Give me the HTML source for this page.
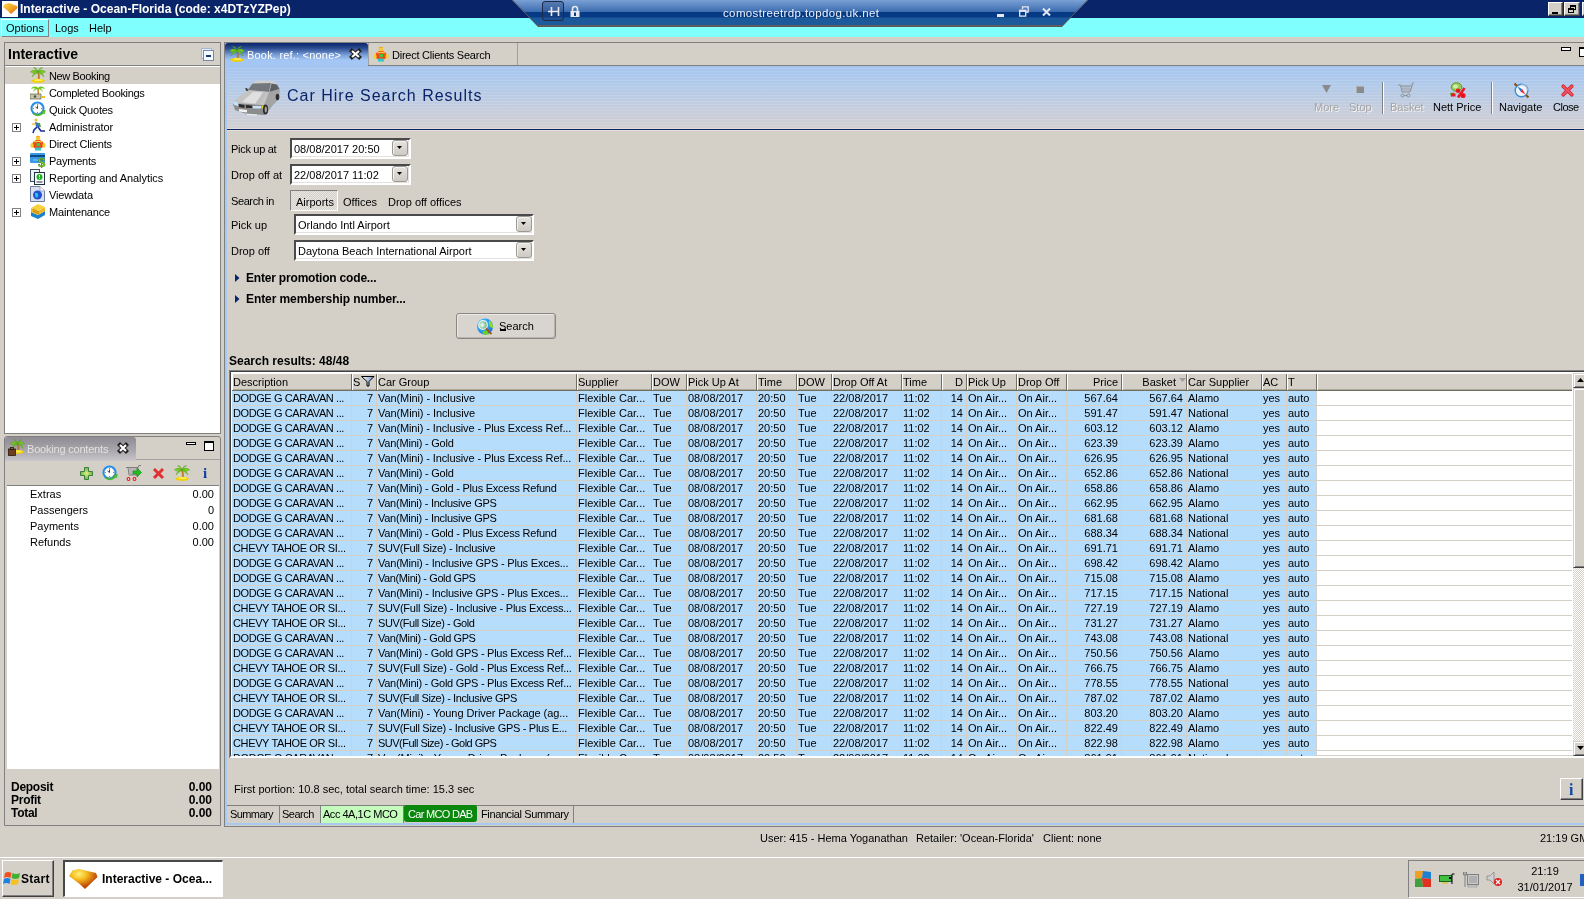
<!DOCTYPE html><html><head><meta charset="utf-8"><title>Interactive</title><style>
*{margin:0;padding:0;box-sizing:border-box}
html,body{width:1584px;height:899px;overflow:hidden}
body{position:relative;background:#d4d0c8;font-family:"Liberation Sans",sans-serif;font-size:11px;color:#000}
.a{position:absolute}
.t{position:absolute;white-space:nowrap;line-height:13px}
.b{font-weight:bold}
svg{position:absolute;overflow:visible}
.r{position:absolute;left:232px;width:1340px;height:15px}
.r span{position:absolute;top:0;height:14px;line-height:14px;white-space:nowrap;overflow:hidden}
.hd span{position:absolute;top:0;height:16px;line-height:16px;white-space:nowrap}
</style></head><body><div id="root" style="position:absolute;left:0;top:0;width:1584px;height:899px;overflow:hidden;background:#d4d0c8;will-change:transform">
<div class="a" style="left:0px;top:0px;width:1584px;height:18px;background:#0a246a"></div>
<div class="a" style="left:2px;top:1px;width:16px;height:16px;background:#fff"></div>
<svg style="left:3px;top:3px" width="14" height="12" viewBox="0 0 14 12"><defs><linearGradient id="og" x1="0" y1="0" x2="1" y2="1"><stop offset="0" stop-color="#ffd84a"/><stop offset="0.6" stop-color="#f0a020"/><stop offset="1" stop-color="#c05010"/></linearGradient></defs><path d="M0 4 L2 1 L6 0 L14 3 L14.5 5 L8 11 L5 8 Z" fill="url(#og)"/></svg>
<div class="t" style="left:20px;top:3.0px;line-height:13px;color:#fff;font-weight:bold;font-size:12px">Interactive - Ocean-Florida (code: x4DTzYZPep)</div>
<div class="a" style="left:1548px;top:2px;width:15px;height:14px;background:#d4d0c8;border-top:1px solid #fff;border-left:1px solid #fff;border-right:1px solid #404040;border-bottom:1px solid #404040;box-shadow:inset -1px -1px 0 #808080"><div class="a" style="left:3px;top:9px;width:6px;height:2px;background:#000"></div></div>
<div class="a" style="left:1564px;top:2px;width:16px;height:14px;background:#d4d0c8;border-top:1px solid #fff;border-left:1px solid #fff;border-right:1px solid #404040;border-bottom:1px solid #404040;box-shadow:inset -1px -1px 0 #808080"><div class="a" style="left:5px;top:2px;width:6px;height:5px;border:1px solid #000;border-top-width:2px"></div><div class="a" style="left:3px;top:5px;width:6px;height:5px;border:1px solid #000;border-top-width:2px;background:#d4d0c8"></div></div>
<div class="a" style="left:1582px;top:2px;width:6px;height:14px;background:#d4d0c8;border-top:1px solid #fff;border-left:1px solid #fff;border-right:1px solid #404040;border-bottom:1px solid #404040;box-shadow:inset -1px -1px 0 #808080"></div>
<div class="a" style="left:0px;top:18px;width:1584px;height:19px;background:#80ffff"></div>
<div class="a" style="left:1px;top:19px;width:48px;height:18px;border-top:1px solid #fff;border-left:1px solid #fff;border-right:1px solid #808080;border-bottom:1px solid #808080"></div>
<div class="t" style="left:6px;top:21.5px;line-height:13px;">Options</div>
<div class="t" style="left:55px;top:21.5px;line-height:13px;">Logs</div>
<div class="t" style="left:89px;top:21.5px;line-height:13px;">Help</div>
<svg style="left:510px;top:0" width="580" height="28" viewBox="0 0 580 28">
<defs><linearGradient id="rg" x1="0" y1="0" x2="0" y2="1">
<stop offset="0" stop-color="#7aa0d4"/><stop offset="0.43" stop-color="#3d6db0"/><stop offset="0.445" stop-color="#063a84"/><stop offset="0.64" stop-color="#063a84"/><stop offset="0.655" stop-color="#1c5a9c"/><stop offset="0.92" stop-color="#1c5a9c"/><stop offset="0.93" stop-color="#5c5c5c"/><stop offset="1" stop-color="#5c5c5c"/></linearGradient></defs>
<path d="M2 0 L578 0 L552 27 L28 27 Z" fill="url(#rg)"/><path d="M2.5 0 L28.5 26.5 L551.5 26.5 L577.5 0" stroke="#5a5a5a" stroke-width="1" fill="none"/>
</svg>
<div class="a" style="left:542px;top:1px;width:22px;height:20px;border:1px solid #1a2a48;border-radius:3px;background:rgba(40,70,120,0.35)"></div>
<svg style="left:548px;top:6px" width="12" height="11" viewBox="0 0 12 11"><path d="M0 5.5 H11 M3.5 1 V10 M10.5 1 V10" stroke="#e8e8f0" stroke-width="1.6" fill="none"/></svg>
<svg style="left:570px;top:5px" width="10" height="13" viewBox="0 0 10 13"><path d="M2.5 6 V4 A2.5 2.5 0 0 1 7.5 4 V6" stroke="#e8e8f0" stroke-width="1.6" fill="none"/><rect x="0.5" y="6" width="9" height="6" fill="#e8e8f0"/><rect x="4" y="7.5" width="2" height="3.5" fill="#0a3a80"/></svg>
<div class="t" style="left:723px;top:6.5px;line-height:13px;color:#eef2fa;font-size:11.5px;letter-spacing:0.37px">comostreetrdp.topdog.uk.net</div>
<div class="a" style="left:997px;top:14px;width:7px;height:3px;background:#e8e8f0"></div>
<svg style="left:1019px;top:6px" width="10" height="11" viewBox="0 0 10 11"><path d="M3.5 3 V0.8 H9.2 V6 H7" stroke="#e8e8f0" stroke-width="1.3" fill="none"/><rect x="0.7" y="4.3" width="6" height="5.8" stroke="#e8e8f0" stroke-width="1.3" fill="none"/><rect x="0.7" y="4.3" width="6" height="1.6" fill="#e8e8f0"/></svg>
<svg style="left:1042px;top:8px" width="9" height="8" viewBox="0 0 9 8"><path d="M1 0.5 L8 7.5 M8 0.5 L1 7.5" stroke="#e8e8f0" stroke-width="2"/></svg>
<div class="a" style="left:4px;top:42px;width:217px;height:392px;border:1px solid #808080;background:#d4d0c8"></div>
<div class="t" style="left:8px;top:46.0px;line-height:16px;font-weight:bold;font-size:14px;">Interactive</div>
<div class="a" style="left:201px;top:48px;width:11px;height:11px;border:1px solid #a8b8d0;background:#e0ecf8"></div>
<div class="a" style="left:203px;top:50px;width:11px;height:11px;border:1px solid #7888a8;background:#f4f8ff"><div class="a" style="left:2px;top:4px;width:5px;height:2px;background:#1a3a70"></div></div>
<div class="a" style="left:5px;top:65px;width:215px;height:1px;background:#808080"></div>
<div class="a" style="left:5px;top:66px;width:215px;height:1px;background:#fff"></div>
<div class="a" style="left:5px;top:67px;width:215px;height:366px;background:#fff"></div>
<div class="a" style="left:5px;top:67px;width:215px;height:17px;background:#d4d0c8"></div>
<div class="t" style="left:49px;top:70.0px;line-height:13px;letter-spacing:-0.37px">New Booking</div>
<div class="t" style="left:49px;top:87.0px;line-height:13px;letter-spacing:-0.34px">Completed Bookings</div>
<div class="t" style="left:49px;top:104.0px;line-height:13px;letter-spacing:-0.23px">Quick Quotes</div>
<div class="t" style="left:49px;top:121.0px;line-height:13px;letter-spacing:-0.05px">Administrator</div>
<div class="a" style="left:12px;top:123px;width:9px;height:9px;border:1px solid #808080;background:#fff"><div class="a" style="left:1px;top:3px;width:5px;height:1px;background:#000"></div><div class="a" style="left:3px;top:1px;width:1px;height:5px;background:#000"></div></div>
<div class="t" style="left:49px;top:138.0px;line-height:13px;letter-spacing:-0.18px">Direct Clients</div>
<div class="t" style="left:49px;top:155.0px;line-height:13px;letter-spacing:-0.23px">Payments</div>
<div class="a" style="left:12px;top:157px;width:9px;height:9px;border:1px solid #808080;background:#fff"><div class="a" style="left:1px;top:3px;width:5px;height:1px;background:#000"></div><div class="a" style="left:3px;top:1px;width:1px;height:5px;background:#000"></div></div>
<div class="t" style="left:49px;top:172.0px;line-height:13px;letter-spacing:-0.06px">Reporting and Analytics</div>
<div class="a" style="left:12px;top:174px;width:9px;height:9px;border:1px solid #808080;background:#fff"><div class="a" style="left:1px;top:3px;width:5px;height:1px;background:#000"></div><div class="a" style="left:3px;top:1px;width:1px;height:5px;background:#000"></div></div>
<div class="t" style="left:49px;top:189.0px;line-height:13px;letter-spacing:-0.14px">Viewdata</div>
<div class="t" style="left:49px;top:206.0px;line-height:13px;letter-spacing:-0.19px">Maintenance</div>
<div class="a" style="left:12px;top:208px;width:9px;height:9px;border:1px solid #808080;background:#fff"><div class="a" style="left:1px;top:3px;width:5px;height:1px;background:#000"></div><div class="a" style="left:3px;top:1px;width:1px;height:5px;background:#000"></div></div>
<svg width="0" height="0" style="position:absolute"><defs>
<symbol id="palm" viewBox="0 0 16 16">
<path d="M7.6 5 Q8.6 8 8.2 13 L9.4 13 Q9.8 8 8.6 5Z" fill="#d88a20" stroke="#8a4a10" stroke-width="0.4"/>
<g fill="#78cc1c" stroke="#3c9010" stroke-width="0.35">
<path d="M8 4.5 Q4 1.5 0.3 5 Q2.2 4.6 3.2 6.6 Q4.6 4.4 8 5Z"/>
<path d="M8 4.5 Q12 1.5 15.7 5 Q13.8 4.6 12.8 6.6 Q11.4 4.4 8 5Z"/>
<path d="M8 4.6 Q3.5 5.2 2 10 Q4.2 7.2 8 5.4Z"/>
<path d="M8 4.6 Q12.5 5.2 14 10 Q11.8 7.2 8 5.4Z"/>
<path d="M8 4.5 Q6.5 0.3 3.5 0.6 Q6.6 2 8 4.8Z"/>
<path d="M8 4.5 Q9.5 0.3 12.5 0.6 Q9.4 2 8 4.8Z"/>
</g>
<ellipse cx="8" cy="13.8" rx="6.8" ry="2" fill="#f4d000"/>
<ellipse cx="8.5" cy="13.2" rx="4" ry="0.9" fill="#fff060"/>
</symbol>
<symbol id="clock" viewBox="0 0 16 16">
<circle cx="7.5" cy="7.5" r="7" fill="#1c8cf0"/>
<circle cx="7.5" cy="7.5" r="5" fill="#fff" stroke="#9aa4b0" stroke-width="0.5"/>
<path d="M7.5 3 v1 M7.5 11 v1 M3 7.5 h1 M11 7.5 h1" stroke="#606870" stroke-width="0.8"/>
<path d="M7.5 4.5 V7.5 L5.5 6" stroke="#303030" stroke-width="0.9" fill="none"/>
<path d="M3.5 12 Q8 15 12.5 11.5 L11.5 10.5 L15.5 9 L14.5 13 L13.5 12.5 Q8.5 17 2.8 13 Z" fill="#50c828" stroke="#2a8a18" stroke-width="0.3"/>
</symbol>
<symbol id="runner" viewBox="0 0 16 16">
<circle cx="6" cy="2" r="1.5" fill="#f0c020"/>
<path d="M5 4 L9 5 L10 9 L6 9 Z" fill="#4070c0"/>
<path d="M8 5 L10 5 L11 9 L9 9Z" fill="#40a040"/>
<path d="M2 6 h3" stroke="#f0a000" stroke-width="1"/>
<path d="M7 9 L4 12 L3 15 M8 9 L11 13 H15" stroke="#1a30a0" stroke-width="1.6" fill="none"/>
</symbol>
<symbol id="person" viewBox="0 0 16 16">
<path d="M5.5 2 Q8 -0.5 10.5 2 L9.5 2.5 Q8 1.5 6.5 2.5Z" fill="#f0a810"/>
<circle cx="8" cy="4" r="2.3" fill="#f8c838"/>
<ellipse cx="8" cy="9.5" rx="5.8" ry="4.6" fill="#f04818"/>
<path d="M4 7 Q8 5.5 12 7" stroke="#f8e040" stroke-width="1" fill="none"/>
<rect x="6.5" y="8" width="3.5" height="3" fill="#40c840"/>
<ellipse cx="2" cy="10.5" rx="1.6" ry="2.4" fill="#f8d030"/>
<ellipse cx="14" cy="10.5" rx="1.6" ry="2.4" fill="#f8d030"/>
<rect x="5" y="12.5" width="6" height="3" fill="#30c8c8"/>
</symbol>
<symbol id="card" viewBox="0 0 16 16">
<rect x="0" y="1" width="15" height="10" rx="1" fill="#3898e8"/>
<rect x="0" y="3" width="15" height="2" fill="#104880"/>
<path d="M3 8 h5" stroke="#80c8ff" stroke-width="1"/>
<text x="8" y="15" font-family="Liberation Sans" font-weight="bold" font-size="13" fill="#80d020" stroke="#407010" stroke-width="0.4">$</text>
</symbol>
<symbol id="report" viewBox="0 0 16 16">
<rect x="0.5" y="0.5" width="9" height="12" fill="#e8f0f8" stroke="#405060"/>
<rect x="4.5" y="3.5" width="10" height="12" fill="#f4f8ff" stroke="#203040"/>
<circle cx="9.5" cy="8" r="3" fill="#20b020"/>
<path d="M9.5 6 v2.2 M9.5 9.2 v0.8" stroke="#fff" stroke-width="1"/>
<path d="M6.5 13 h6" stroke="#303030" stroke-width="1"/>
</symbol>
<symbol id="globedoc" viewBox="0 0 16 16">
<path d="M0.5 0.5 H10 L14.5 5 V15.5 H0.5 Z" fill="#d8e0f0" stroke="#7080a0"/>
<path d="M10 0.5 V5 H14.5" fill="#fff" stroke="#a0a8c0"/>
<circle cx="7.5" cy="9" r="4.5" fill="#2050d0"/>
<path d="M5 7 Q7 6 8 8 Q9 10 7 12 Q5 11 5 9Z" fill="#30c0f0"/>
</symbol>
<symbol id="books" viewBox="0 0 16 16">
<path d="M1 9 L8 12 L15 8 L15 12 L8 16 L1 13 Z" fill="#1a80d0"/>
<path d="M1 5 L8 8 L15 4 L15 8 L8 12 L1 9 Z" fill="#f0b820"/>
<path d="M1 5 L8 1 L15 4 L8 8 Z" fill="#f8d040"/>
<path d="M3 6 L9 9 M3 8 L9 11" stroke="#a06000" stroke-width="0.6"/>
</symbol>
<symbol id="palmcash" viewBox="0 0 16 16">
<path d="M8 4 C6 2 3 2 1 5 C3 4 5 4 7 5 Z M8 4 C10 2 13 2 15 5 C13 4 11 4 9 5 Z M8 4 C6 3 4 5 3 8 C5 6 6 5 8 5 Z M8 4 C10 3 12 5 13 8 C11 6 10 5 8 5 Z" fill="#6cc81c"/>
<path d="M7.2 5 L8.8 5 L9.2 10 L7.6 10 Z" fill="#d08820"/>
<rect x="0" y="10" width="11" height="5" fill="#c8c8a8" stroke="#606050" stroke-width="0.7"/>
<circle cx="5" cy="12.5" r="1.3" fill="#505040"/>
<path d="M11 12 h4 v2 h-4z" fill="#f0c020"/>
</symbol>
</defs></svg>
<svg style="left:30px;top:67px" width="16" height="16"><use href="#palm"/></svg>
<svg style="left:30px;top:84px" width="16" height="16"><use href="#palmcash"/></svg>
<svg style="left:30px;top:101px" width="16" height="16"><use href="#clock"/></svg>
<svg style="left:30px;top:118px" width="16" height="16"><use href="#runner"/></svg>
<svg style="left:30px;top:135px" width="16" height="16"><use href="#person"/></svg>
<svg style="left:30px;top:152px" width="16" height="16"><use href="#card"/></svg>
<svg style="left:30px;top:169px" width="16" height="16"><use href="#report"/></svg>
<svg style="left:30px;top:186px" width="16" height="16"><use href="#globedoc"/></svg>
<svg style="left:30px;top:203px" width="16" height="16"><use href="#books"/></svg>
<div class="a" style="left:4px;top:436px;width:217px;height:390px;border:1px solid #808080;border-radius:3px 3px 0 0;background:#d4d0c8"></div>
<div class="a" style="left:5px;top:437px;width:131px;height:24px;background:linear-gradient(#8e8c92,#a8a6ac 55%,#c8c6ca);border-radius:3px 3px 0 0"></div>
<div class="a" style="left:136px;top:459px;width:84px;height:1px;background:#a0a0a0"></div>
<svg style="left:10px;top:439px" width="15" height="15"><use href="#palm"/></svg>
<svg style="left:8px;top:447px" width="8" height="9"><rect x="0.5" y="2" width="7" height="6.5" fill="#6a4020" stroke="#301808" stroke-width="0.8"/><rect x="2.5" y="0.5" width="3" height="2" fill="none" stroke="#301808" stroke-width="0.8"/></svg>
<div class="t" style="left:27px;top:442.5px;line-height:13px;color:#e4e2dc;letter-spacing:-0.2px">Booking contents</div>
<svg style="left:118px;top:443px" width="10" height="10" viewBox="0 0 10 10"><path d="M2 2 L8 8 M8 2 L2 8" stroke="#202020" stroke-width="4.2" stroke-linecap="square"/><path d="M2 2 L8 8 M8 2 L2 8" stroke="#fff" stroke-width="2.2"/></svg>
<div class="a" style="left:186px;top:442px;width:10px;height:3px;border:1px solid #000;background:#fff"></div>
<div class="a" style="left:204px;top:441px;width:10px;height:10px;border:1px solid #000;border-top-width:2px;background:#fff"></div>
<div class="a" style="left:7px;top:461px;width:212px;height:25px;background:#d4d0c8;border-bottom:1px solid #808080"></div>
<svg style="left:80px;top:467px" width="13" height="13" viewBox="0 0 13 13"><defs><radialGradient id="pg"><stop offset="0" stop-color="#e0f080"/><stop offset="1" stop-color="#70b048"/></radialGradient></defs><path d="M4.5 0.5 h4 v4 h4 v4 h-4 v4 h-4 v-4 h-4 v-4 h4 z" fill="url(#pg)" stroke="#3a8040" stroke-width="1"/></svg>
<svg style="left:102px;top:465px" width="16" height="16"><use href="#clock"/></svg>
<svg style="left:126px;top:465px" width="16" height="16" viewBox="0 0 16 16"><path d="M0 2.5 H2 L3 10 H11 L12 2.5 H1.5 M12 2.5 L12.8 0.5 H15" stroke="#808080" stroke-width="1" fill="none"/><path d="M4 3 v7 M6 3 v7 M8 3 v7 M10 3 v7" stroke="#909090" stroke-width="0.8"/><circle cx="2.5" cy="14" r="1.4" fill="#fff" stroke="#e01818" stroke-width="1.1"/><circle cx="8.5" cy="14" r="1.4" fill="#fff" stroke="#e01818" stroke-width="1.1"/><path d="M7 6 h4 v-3 l4.5 4.5 l-4.5 4.5 v-3 h-4z" fill="#20c020" stroke="#108010" stroke-width="0.6"/></svg>
<svg style="left:152px;top:467px" width="13" height="13" viewBox="0 0 13 13"><path d="M2 2 L11 11 M11 2 L2 11" stroke="#e03030" stroke-width="3"/></svg>
<svg style="left:174px;top:465px" width="16" height="16"><use href="#palm"/></svg>
<div class="t" style="left:203px;top:466px;line-height:14px;font-family:'Liberation Serif',serif;font-weight:bold;font-size:15px;color:#1040a0">i</div>
<div class="a" style="left:7px;top:486px;width:212px;height:283px;background:#fff"></div>
<div class="t" style="left:30px;top:487.5px;line-height:13px;">Extras</div>
<div class="t" style="right:1370px;top:487.5px;line-height:13px;text-align:right;">0.00</div>
<div class="t" style="left:30px;top:503.5px;line-height:13px;">Passengers</div>
<div class="t" style="right:1370px;top:503.5px;line-height:13px;text-align:right;">0</div>
<div class="t" style="left:30px;top:519.5px;line-height:13px;">Payments</div>
<div class="t" style="right:1370px;top:519.5px;line-height:13px;text-align:right;">0.00</div>
<div class="t" style="left:30px;top:535.5px;line-height:13px;">Refunds</div>
<div class="t" style="right:1370px;top:535.5px;line-height:13px;text-align:right;">0.00</div>
<div class="t" style="left:11px;top:780.5px;line-height:13px;font-weight:bold;font-size:12px;letter-spacing:-0.27px">Deposit</div>
<div class="t" style="right:1372px;top:780.5px;line-height:13px;text-align:right;font-weight:bold;font-size:12px">0.00</div>
<div class="t" style="left:11px;top:793.5px;line-height:13px;font-weight:bold;font-size:12px;letter-spacing:-0.27px">Profit</div>
<div class="t" style="right:1372px;top:793.5px;line-height:13px;text-align:right;font-weight:bold;font-size:12px">0.00</div>
<div class="t" style="left:11px;top:806.5px;line-height:13px;font-weight:bold;font-size:12px;letter-spacing:-0.27px">Total</div>
<div class="t" style="right:1372px;top:806.5px;line-height:13px;text-align:right;font-weight:bold;font-size:12px">0.00</div>
<div class="a" style="left:224px;top:42px;width:1360px;height:785px;border-top:1px solid #808080;border-left:1px solid #808080;border-bottom:1px solid #808080;background:#d4d0c8"></div>
<div class="a" style="left:225px;top:43px;width:2px;height:782px;background:#a6caf0"></div>
<div class="a" style="left:225px;top:823px;width:1359px;height:2px;background:#a6caf0"></div>
<div class="a" style="left:227px;top:59px;width:1357px;height:70px;background:repeating-linear-gradient(rgba(255,255,255,0.06) 0 1px, rgba(0,0,0,0.015) 1px 3px),linear-gradient(#a4c6f4 0%,#b4cdee 35%,#c8d0e0 70%,#d4d2d4 100%)"></div>
<div class="a" style="left:227px;top:128px;width:1357px;height:1px;background:#e6ded6"></div>
<div class="a" style="left:227px;top:129px;width:1357px;height:1px;background:#0a246a"></div>
<div class="a" style="left:227px;top:130px;width:1357px;height:1px;background:#e2e0d8"></div>
<div class="a" style="left:368px;top:43px;width:1216px;height:23px;background:#d4d0c8;border-bottom:1px solid #808080"></div>
<div class="a" style="left:225px;top:43px;width:143px;height:23px;background:linear-gradient(#0a246a 0px,#2a4a90 5px,#7aa0d8 12px,#a4c6f4 17px);border-radius:3px 3px 0 0"></div>
<svg style="left:229px;top:46px" width="16" height="16"><use href="#palm"/></svg>
<div class="t" style="left:247px;top:48.5px;line-height:13px;color:#fff;letter-spacing:0.2px">Book. ref.: &lt;none&gt;</div>
<svg style="left:350px;top:49px" width="11" height="10" viewBox="0 0 11 10"><path d="M2 2 L9 8 M9 2 L2 8" stroke="#202020" stroke-width="4.2" stroke-linecap="square"/><path d="M2 2 L9 8 M9 2 L2 8" stroke="#fff" stroke-width="2.2"/></svg>
<div class="a" style="left:368px;top:43px;width:150px;height:22px;border-left:1px solid #a0a0a0;border-right:1px solid #a0a0a0"></div>
<svg style="left:373px;top:46px" width="16" height="16"><use href="#person"/></svg>
<div class="t" style="left:392px;top:48.5px;line-height:13px;letter-spacing:-0.24px">Direct Clients Search</div>
<div class="a" style="left:1561px;top:47px;width:10px;height:4px;border:1px solid #000;background:#fff"></div>
<div class="a" style="left:1579px;top:47px;width:10px;height:10px;border:1px solid #000;border-top-width:2px;background:#fff"></div>
<svg style="left:233px;top:80px" width="48" height="36" viewBox="0 0 48 36">
<path d="M30 25 L35 12 L47 9 L46 19 L40 25 L34 33 Z" fill="#a4a4a4"/>
<path d="M19 3 L24 0.5 L40 1 L44 4 L47 9 L36 12 Z" fill="#cfcfcf"/>
<path d="M14.5 10.5 L19.5 3.5 L38 3 L36 12 Z" fill="#74787c"/>
<path d="M38.5 3.5 L44 4.5 L46.5 9 L36.5 12Z" fill="#5c6064"/>
<path d="M0.5 21.5 L14.5 10 L36 12 L31 25 L7 23.5 Z" fill="#c4c4c4"/>
<path d="M9 22 L20 12 L31 12.5 L24 24Z" fill="#e0e0e0"/>
<path d="M22 24 L30 12.5 L33 12.7 L27 24.5Z" fill="#bdbdbd"/>
<path d="M0 24 L7 23.5 L31 25 L34 33 L31 35 L12 33.5 L2 30 Z" fill="#8c8c8c"/>
<path d="M6 24 L11.5 25 L11.5 28 L6 27 Z M13 25 L19 25.5 L19 28 L13 28Z" fill="#2c2c2c"/>
<path d="M1 21.5 L5 23 L5 26 L1 25Z" fill="#c4e2fa"/>
<path d="M20 26 L28 26 L28 28.5 L20 28.5Z" fill="#c4e2fa"/>
<circle cx="30" cy="27" r="1.6" fill="#f0d400"/>
<path d="M6 29 L14 30 L14 32.5 L6 31.5 Z" fill="#f4f4f4"/>
<path d="M14 34 L24 34.5 L24 35.5 L14 35Z" fill="#f0f0f0"/>
<ellipse cx="32.5" cy="29.5" rx="2.6" ry="5" fill="#2e2e2e"/>
<ellipse cx="32.8" cy="29.5" rx="1.2" ry="3" fill="#a0a0a0"/>
<ellipse cx="44.5" cy="17" rx="1.8" ry="3.2" fill="#2e2e2e"/>
<path d="M12 8.5 L14 8 L15.5 11 L13.5 11Z" fill="#3a3a3a"/>
</svg>
<div class="t" style="left:287px;top:87.0px;line-height:18px;color:#0a246a;font-size:16px;letter-spacing:1px">Car Hire Search Results</div>
<div class="t" style="left:1314px;top:100.5px;line-height:13px;color:#a4a4a4;text-shadow:1px 1px 0 #f4f4f4">More</div>
<svg style="left:1322px;top:85px" width="9" height="8" viewBox="0 0 9 8"><path d="M0 0 H9 L4.5 8 Z" fill="#8a8a8a"/></svg>
<div class="t" style="left:1349px;top:100.5px;line-height:13px;color:#a4a4a4;text-shadow:1px 1px 0 #f4f4f4">Stop</div>
<div class="a" style="left:1356px;top:86px;width:8px;height:7px;background:#8a8a8a;border-top:1px solid #b0b0b0;border-left:1px solid #b0b0b0"></div>
<div class="a" style="left:1382px;top:82px;width:1px;height:32px;background:#808080;box-shadow:1px 0 0 #fff"></div>
<div class="t" style="left:1390px;top:100.5px;line-height:13px;color:#a4a4a4;text-shadow:1px 1px 0 #f4f4f4">Basket</div>
<svg style="left:1398px;top:82px" width="16" height="16" viewBox="0 0 16 16"><path d="M0 3 H2.5 L4 10 H12 L14 4 H3 M14 4 L14.5 1 H16" stroke="#909090" stroke-width="1" fill="none"/><path d="M5 4 v6 M7 4 v6 M9 4 v6 M11 4 v6 M3 7 h11" stroke="#a0a0a0" stroke-width="0.7"/><circle cx="4.5" cy="13.5" r="1.5" fill="none" stroke="#909090"/><circle cx="10.5" cy="13.5" r="1.5" fill="none" stroke="#909090"/><path d="M6 13.5 h3" stroke="#909090"/></svg>
<div class="t" style="left:1433px;top:100.5px;line-height:13px;color:#000">Nett Price</div>
<svg style="left:1449px;top:82px" width="18" height="17" viewBox="0 0 18 17"><ellipse cx="7.5" cy="5" rx="5.3" ry="4.3" fill="#98cc58" stroke="#5a9420" stroke-width="0.9"/><ellipse cx="6.5" cy="4.5" rx="2.5" ry="2" fill="#d0ecb0"/><path d="M1 11 L5 10.5 L6 13 L2 14.5Z" fill="#5aa020"/><rect x="2" y="11.5" width="4.5" height="3" fill="#f01820"/><circle cx="9" cy="8.8" r="2.3" fill="#f01820"/><circle cx="14" cy="13.5" r="2.6" fill="#f01820"/><path d="M15.5 6 L9 15.5" stroke="#f01820" stroke-width="2.6"/><circle cx="9" cy="8.8" r="0.8" fill="#c01018"/><circle cx="14" cy="13.5" r="0.9" fill="#c01018"/></svg>
<div class="a" style="left:1491px;top:82px;width:1px;height:32px;background:#808080;box-shadow:1px 0 0 #fff"></div>
<div class="t" style="left:1499px;top:100.5px;line-height:13px;color:#000">Navigate</div>
<svg style="left:1513px;top:82px" width="17" height="17" viewBox="0 0 17 17"><circle cx="8.5" cy="8.5" r="6.3" fill="#eef6fc" stroke="#3c8cd0" stroke-width="1.4"/><path d="M8.5 2.6 A5.9 5.9 0 0 1 14.4 8.5" stroke="#c0c8d0" stroke-width="1.2" fill="none"/><path d="M4.5 4.5 L9.5 7.5 L7.5 9.5 Z" fill="#2070e0"/><path d="M12.5 12.5 L7.5 9.5 L9.5 7.5 Z" fill="#f02020"/><path d="M1.5 1.5 L4 4 M15.5 15.5 L13 13" stroke="#8a5018" stroke-width="2.2"/></svg>
<div class="t" style="left:1553px;top:100.5px;line-height:13px;letter-spacing:-0.5px">Close</div>
<svg style="left:1561px;top:84px" width="13" height="13" viewBox="0 0 13 13"><path d="M2.2 2.2 L10.8 10.8 M10.8 2.2 L2.2 10.8" stroke="#d02030" stroke-width="3.6" stroke-linecap="round"/><path d="M2.2 2.2 L10.8 10.8 M10.8 2.2 L2.2 10.8" stroke="#f05060" stroke-width="2" stroke-linecap="round"/></svg>
<div class="t" style="left:231px;top:142.5px;line-height:13px;letter-spacing:-0.3px">Pick up at</div>
<div class="a" style="left:290px;top:138px;width:121px;height:21px;background:#fff;border-top:2px solid #4a4a4a;border-left:2px solid #4a4a4a;border-right:2px solid #fff;border-bottom:2px solid #fff;box-shadow:inset -1px -1px 0 #e4e2de"></div>
<div class="t" style="left:294px;top:142.5px;line-height:13px;">08/08/2017 20:50</div>
<div class="a" style="left:392px;top:140px;width:16px;height:16px;background:linear-gradient(#e6e2de,#cdc9c3);border:1px solid #9c9892;border-radius:3px;box-shadow:inset 1px 1px 0 #f4f2f0"><svg style="left:4px;top:5px" width="5" height="3" viewBox="0 0 5 3"><path d="M0 0 H5 L2.5 3 Z" fill="#000"/></svg></div>
<div class="t" style="left:231px;top:168.5px;line-height:13px;">Drop off at</div>
<div class="a" style="left:290px;top:164px;width:121px;height:21px;background:#fff;border-top:2px solid #4a4a4a;border-left:2px solid #4a4a4a;border-right:2px solid #fff;border-bottom:2px solid #fff;box-shadow:inset -1px -1px 0 #e4e2de"></div>
<div class="t" style="left:294px;top:168.5px;line-height:13px;">22/08/2017 11:02</div>
<div class="a" style="left:392px;top:166px;width:16px;height:16px;background:linear-gradient(#e6e2de,#cdc9c3);border:1px solid #9c9892;border-radius:3px;box-shadow:inset 1px 1px 0 #f4f2f0"><svg style="left:4px;top:5px" width="5" height="3" viewBox="0 0 5 3"><path d="M0 0 H5 L2.5 3 Z" fill="#000"/></svg></div>
<div class="t" style="left:231px;top:194.5px;line-height:13px;letter-spacing:-0.4px">Search in</div>
<div class="a" style="left:290px;top:190px;width:48px;height:21px;background:repeating-conic-gradient(#d4d0c8 0 25%,#e8e6e2 0 50%) 0 0/2px 2px;border-top:1px solid #808080;border-left:1px solid #808080;border-right:1px solid #fff;border-bottom:1px solid #fff"></div>
<div class="t" style="left:296px;top:195.5px;line-height:13px;">Airports</div>
<div class="t" style="left:343px;top:195.5px;line-height:13px;">Offices</div>
<div class="t" style="left:388px;top:195.5px;line-height:13px;">Drop off offices</div>
<div class="t" style="left:231px;top:218.5px;line-height:13px;">Pick up</div>
<div class="a" style="left:294px;top:214px;width:240px;height:21px;background:#fff;border-top:2px solid #4a4a4a;border-left:2px solid #4a4a4a;border-right:2px solid #fff;border-bottom:2px solid #fff;box-shadow:inset -1px -1px 0 #e4e2de"></div>
<div class="t" style="left:298px;top:218.5px;line-height:13px;">Orlando Intl Airport</div>
<div class="a" style="left:516px;top:216px;width:16px;height:16px;background:linear-gradient(#e6e2de,#cdc9c3);border:1px solid #9c9892;border-radius:3px;box-shadow:inset 1px 1px 0 #f4f2f0"><svg style="left:4px;top:5px" width="5" height="3" viewBox="0 0 5 3"><path d="M0 0 H5 L2.5 3 Z" fill="#000"/></svg></div>
<div class="t" style="left:231px;top:244.5px;line-height:13px;">Drop off</div>
<div class="a" style="left:294px;top:240px;width:240px;height:21px;background:#fff;border-top:2px solid #4a4a4a;border-left:2px solid #4a4a4a;border-right:2px solid #fff;border-bottom:2px solid #fff;box-shadow:inset -1px -1px 0 #e4e2de"></div>
<div class="t" style="left:298px;top:244.5px;line-height:13px;">Daytona Beach International Airport</div>
<div class="a" style="left:516px;top:242px;width:16px;height:16px;background:linear-gradient(#e6e2de,#cdc9c3);border:1px solid #9c9892;border-radius:3px;box-shadow:inset 1px 1px 0 #f4f2f0"><svg style="left:4px;top:5px" width="5" height="3" viewBox="0 0 5 3"><path d="M0 0 H5 L2.5 3 Z" fill="#000"/></svg></div>
<svg style="left:235px;top:274px" width="5" height="8" viewBox="0 0 5 8"><path d="M0 0 L4.5 4 L0 8Z" fill="#0a246a"/></svg>
<div class="t" style="left:246px;top:271.5px;line-height:13px;font-weight:bold;font-size:12px;letter-spacing:-0.19px">Enter promotion code...</div>
<svg style="left:235px;top:295px" width="5" height="8" viewBox="0 0 5 8"><path d="M0 0 L4.5 4 L0 8Z" fill="#0a246a"/></svg>
<div class="t" style="left:246px;top:292.5px;line-height:13px;font-weight:bold;font-size:12px;letter-spacing:-0.09px">Enter membership number...</div>
<div class="a" style="left:456px;top:313px;width:100px;height:26px;background:#d8d4d0;border:1px solid #8a8782;border-radius:3px;box-shadow:inset 1px 1px 0 #ece9e6,inset -1px -1px 0 #b8b4ae"></div>
<svg style="left:476px;top:318px" width="18" height="17" viewBox="0 0 18 17"><defs><radialGradient id="gl" cx="0.35" cy="0.35" r="0.7"><stop offset="0" stop-color="#50e0ff"/><stop offset="1" stop-color="#1070e8"/></radialGradient><radialGradient id="ln" cx="0.4" cy="0.5" r="0.6"><stop offset="0" stop-color="#fff"/><stop offset="0.5" stop-color="#a8d8b8"/><stop offset="1" stop-color="#50a060"/></radialGradient></defs><circle cx="9" cy="8.5" r="8" fill="url(#gl)"/><path d="M13 2 Q17 5 17 10 L14 9 L13 5Z" fill="#90e020"/><path d="M6 14 L11 12 L13 16.5 L8 16.8Z" fill="#70d020"/><circle cx="7" cy="7" r="4.3" fill="url(#ln)" stroke="#f4f4f4" stroke-width="1.2"/><path d="M10 10.5 L15.5 16" stroke="#a05818" stroke-width="2"/></svg>
<div class="t" style="left:499px;top:319.5px;line-height:13px;">Search</div>
<div class="a" style="left:500px;top:329px;width:6px;height:2px;background:#000"></div>
<div class="t" style="left:229px;top:354.5px;line-height:13px;font-weight:bold;font-size:12px">Search results: 48/48</div>
<div class="a" style="left:229px;top:370px;width:1360px;height:388px;background:#fff;border-top:2px solid #404040;border-left:2px solid #404040;border-bottom:2px solid #fff;box-shadow:inset 0 -1px 0 #d4d0c8"></div>
<div class="a" style="left:229px;top:370px;width:1360px;height:1px;background:#808080"></div>
<div class="a" style="left:229px;top:370px;width:1px;height:388px;background:#808080"></div>
<div class="a" style="left:232px;top:374px;width:1340px;height:17px;background:#d4d0c8;border-bottom:1px solid #716f64;box-shadow:inset 0 -1px 0 #aca899"></div>
<div class="a" style="left:351px;top:374px;width:1px;height:16px;background:#716f64"></div>
<div class="a" style="left:352px;top:374px;width:1px;height:16px;background:#fff"></div>
<div class="a" style="left:376px;top:374px;width:1px;height:16px;background:#716f64"></div>
<div class="a" style="left:377px;top:374px;width:1px;height:16px;background:#fff"></div>
<div class="a" style="left:576px;top:374px;width:1px;height:16px;background:#716f64"></div>
<div class="a" style="left:577px;top:374px;width:1px;height:16px;background:#fff"></div>
<div class="a" style="left:651px;top:374px;width:1px;height:16px;background:#716f64"></div>
<div class="a" style="left:652px;top:374px;width:1px;height:16px;background:#fff"></div>
<div class="a" style="left:686px;top:374px;width:1px;height:16px;background:#716f64"></div>
<div class="a" style="left:687px;top:374px;width:1px;height:16px;background:#fff"></div>
<div class="a" style="left:756px;top:374px;width:1px;height:16px;background:#716f64"></div>
<div class="a" style="left:757px;top:374px;width:1px;height:16px;background:#fff"></div>
<div class="a" style="left:796px;top:374px;width:1px;height:16px;background:#716f64"></div>
<div class="a" style="left:797px;top:374px;width:1px;height:16px;background:#fff"></div>
<div class="a" style="left:831px;top:374px;width:1px;height:16px;background:#716f64"></div>
<div class="a" style="left:832px;top:374px;width:1px;height:16px;background:#fff"></div>
<div class="a" style="left:901px;top:374px;width:1px;height:16px;background:#716f64"></div>
<div class="a" style="left:902px;top:374px;width:1px;height:16px;background:#fff"></div>
<div class="a" style="left:941px;top:374px;width:1px;height:16px;background:#716f64"></div>
<div class="a" style="left:942px;top:374px;width:1px;height:16px;background:#fff"></div>
<div class="a" style="left:966px;top:374px;width:1px;height:16px;background:#716f64"></div>
<div class="a" style="left:967px;top:374px;width:1px;height:16px;background:#fff"></div>
<div class="a" style="left:1016px;top:374px;width:1px;height:16px;background:#716f64"></div>
<div class="a" style="left:1017px;top:374px;width:1px;height:16px;background:#fff"></div>
<div class="a" style="left:1066px;top:374px;width:1px;height:16px;background:#716f64"></div>
<div class="a" style="left:1067px;top:374px;width:1px;height:16px;background:#fff"></div>
<div class="a" style="left:1121px;top:374px;width:1px;height:16px;background:#716f64"></div>
<div class="a" style="left:1122px;top:374px;width:1px;height:16px;background:#fff"></div>
<div class="a" style="left:1186px;top:374px;width:1px;height:16px;background:#716f64"></div>
<div class="a" style="left:1187px;top:374px;width:1px;height:16px;background:#fff"></div>
<div class="a" style="left:1261px;top:374px;width:1px;height:16px;background:#716f64"></div>
<div class="a" style="left:1262px;top:374px;width:1px;height:16px;background:#fff"></div>
<div class="a" style="left:1286px;top:374px;width:1px;height:16px;background:#716f64"></div>
<div class="a" style="left:1287px;top:374px;width:1px;height:16px;background:#fff"></div>
<div class="a" style="left:1316px;top:374px;width:1px;height:16px;background:#716f64"></div>
<div class="a" style="left:1317px;top:374px;width:1px;height:16px;background:#fff"></div>
<div class="a" style="left:232px;top:374px;width:1px;height:16px;background:#fff"></div>
<div class="t" style="left:233px;top:375px;line-height:14px">Description</div>
<div class="t" style="left:353px;top:375px;line-height:14px">S</div>
<div class="t" style="left:378px;top:375px;line-height:14px">Car Group</div>
<div class="t" style="left:578px;top:375px;line-height:14px">Supplier</div>
<div class="t" style="left:653px;top:375px;line-height:14px">DOW</div>
<div class="t" style="left:688px;top:375px;line-height:14px">Pick Up At</div>
<div class="t" style="left:758px;top:375px;line-height:14px">Time</div>
<div class="t" style="left:798px;top:375px;line-height:14px">DOW</div>
<div class="t" style="left:833px;top:375px;line-height:14px">Drop Off At</div>
<div class="t" style="left:903px;top:375px;line-height:14px">Time</div>
<div class="t" style="left:942px;width:21px;top:375px;line-height:14px;text-align:right">D</div>
<div class="t" style="left:968px;top:375px;line-height:14px">Pick Up</div>
<div class="t" style="left:1018px;top:375px;line-height:14px">Drop Off</div>
<div class="t" style="left:1067px;width:51px;top:375px;line-height:14px;text-align:right">Price</div>
<div class="t" style="left:1122px;width:54px;top:375px;line-height:14px;text-align:right">Basket</div>
<div class="t" style="left:1188px;top:375px;line-height:14px">Car Supplier</div>
<div class="t" style="left:1263px;top:375px;line-height:14px">AC</div>
<div class="t" style="left:1288px;top:375px;line-height:14px">T</div>
<svg style="left:361px;top:376px" width="14" height="11" viewBox="0 0 14 11"><defs><linearGradient id="fg" x1="0" x2="1"><stop offset="0" stop-color="#fff"/><stop offset="1" stop-color="#6a90c8"/></linearGradient></defs><path d="M0.5 0.5 H13 L8 5.5 V10 H6 V5.5 Z" fill="url(#fg)" stroke="#000" stroke-width="1"/></svg>
<svg style="left:1179px;top:378px" width="7" height="4" viewBox="0 0 7 4"><path d="M0 0 H7 L3.5 4Z" fill="#a0a0a0"/></svg>
<div class="a" style="left:232px;top:391px;width:1340px;height:365px;overflow:hidden">
<div class="a" style="left:0;top:0px;width:1085px;height:14px;background:#b6ddfc"></div>
<div class="a" style="left:0;top:14px;width:1340px;height:1px;background:#d4d0c8"></div>
<div class="a" style="left:0;top:15px;width:1085px;height:14px;background:#b6ddfc"></div>
<div class="a" style="left:0;top:29px;width:1340px;height:1px;background:#d4d0c8"></div>
<div class="a" style="left:0;top:30px;width:1085px;height:14px;background:#b6ddfc"></div>
<div class="a" style="left:0;top:44px;width:1340px;height:1px;background:#d4d0c8"></div>
<div class="a" style="left:0;top:45px;width:1085px;height:14px;background:#b6ddfc"></div>
<div class="a" style="left:0;top:59px;width:1340px;height:1px;background:#d4d0c8"></div>
<div class="a" style="left:0;top:60px;width:1085px;height:14px;background:#b6ddfc"></div>
<div class="a" style="left:0;top:74px;width:1340px;height:1px;background:#d4d0c8"></div>
<div class="a" style="left:0;top:75px;width:1085px;height:14px;background:#b6ddfc"></div>
<div class="a" style="left:0;top:89px;width:1340px;height:1px;background:#d4d0c8"></div>
<div class="a" style="left:0;top:90px;width:1085px;height:14px;background:#b6ddfc"></div>
<div class="a" style="left:0;top:104px;width:1340px;height:1px;background:#d4d0c8"></div>
<div class="a" style="left:0;top:105px;width:1085px;height:14px;background:#b6ddfc"></div>
<div class="a" style="left:0;top:119px;width:1340px;height:1px;background:#d4d0c8"></div>
<div class="a" style="left:0;top:120px;width:1085px;height:14px;background:#b6ddfc"></div>
<div class="a" style="left:0;top:134px;width:1340px;height:1px;background:#d4d0c8"></div>
<div class="a" style="left:0;top:135px;width:1085px;height:14px;background:#b6ddfc"></div>
<div class="a" style="left:0;top:149px;width:1340px;height:1px;background:#d4d0c8"></div>
<div class="a" style="left:0;top:150px;width:1085px;height:14px;background:#b6ddfc"></div>
<div class="a" style="left:0;top:164px;width:1340px;height:1px;background:#d4d0c8"></div>
<div class="a" style="left:0;top:165px;width:1085px;height:14px;background:#b6ddfc"></div>
<div class="a" style="left:0;top:179px;width:1340px;height:1px;background:#d4d0c8"></div>
<div class="a" style="left:0;top:180px;width:1085px;height:14px;background:#b6ddfc"></div>
<div class="a" style="left:0;top:194px;width:1340px;height:1px;background:#d4d0c8"></div>
<div class="a" style="left:0;top:195px;width:1085px;height:14px;background:#b6ddfc"></div>
<div class="a" style="left:0;top:209px;width:1340px;height:1px;background:#d4d0c8"></div>
<div class="a" style="left:0;top:210px;width:1085px;height:14px;background:#b6ddfc"></div>
<div class="a" style="left:0;top:224px;width:1340px;height:1px;background:#d4d0c8"></div>
<div class="a" style="left:0;top:225px;width:1085px;height:14px;background:#b6ddfc"></div>
<div class="a" style="left:0;top:239px;width:1340px;height:1px;background:#d4d0c8"></div>
<div class="a" style="left:0;top:240px;width:1085px;height:14px;background:#b6ddfc"></div>
<div class="a" style="left:0;top:254px;width:1340px;height:1px;background:#d4d0c8"></div>
<div class="a" style="left:0;top:255px;width:1085px;height:14px;background:#b6ddfc"></div>
<div class="a" style="left:0;top:269px;width:1340px;height:1px;background:#d4d0c8"></div>
<div class="a" style="left:0;top:270px;width:1085px;height:14px;background:#b6ddfc"></div>
<div class="a" style="left:0;top:284px;width:1340px;height:1px;background:#d4d0c8"></div>
<div class="a" style="left:0;top:285px;width:1085px;height:14px;background:#b6ddfc"></div>
<div class="a" style="left:0;top:299px;width:1340px;height:1px;background:#d4d0c8"></div>
<div class="a" style="left:0;top:300px;width:1085px;height:14px;background:#b6ddfc"></div>
<div class="a" style="left:0;top:314px;width:1340px;height:1px;background:#d4d0c8"></div>
<div class="a" style="left:0;top:315px;width:1085px;height:14px;background:#b6ddfc"></div>
<div class="a" style="left:0;top:329px;width:1340px;height:1px;background:#d4d0c8"></div>
<div class="a" style="left:0;top:330px;width:1085px;height:14px;background:#b6ddfc"></div>
<div class="a" style="left:0;top:344px;width:1340px;height:1px;background:#d4d0c8"></div>
<div class="a" style="left:0;top:345px;width:1085px;height:14px;background:#b6ddfc"></div>
<div class="a" style="left:0;top:359px;width:1340px;height:1px;background:#d4d0c8"></div>
<div class="a" style="left:0;top:360px;width:1085px;height:14px;background:#b6ddfc"></div>
<div class="a" style="left:0;top:374px;width:1340px;height:1px;background:#d4d0c8"></div>
<div class="a" style="left:119px;top:0;width:1px;height:365px;background:#d4d0c8"></div>
<div class="a" style="left:144px;top:0;width:1px;height:365px;background:#d4d0c8"></div>
<div class="a" style="left:344px;top:0;width:1px;height:365px;background:#d4d0c8"></div>
<div class="a" style="left:419px;top:0;width:1px;height:365px;background:#d4d0c8"></div>
<div class="a" style="left:454px;top:0;width:1px;height:365px;background:#d4d0c8"></div>
<div class="a" style="left:524px;top:0;width:1px;height:365px;background:#d4d0c8"></div>
<div class="a" style="left:564px;top:0;width:1px;height:365px;background:#d4d0c8"></div>
<div class="a" style="left:599px;top:0;width:1px;height:365px;background:#d4d0c8"></div>
<div class="a" style="left:669px;top:0;width:1px;height:365px;background:#d4d0c8"></div>
<div class="a" style="left:709px;top:0;width:1px;height:365px;background:#d4d0c8"></div>
<div class="a" style="left:734px;top:0;width:1px;height:365px;background:#d4d0c8"></div>
<div class="a" style="left:784px;top:0;width:1px;height:365px;background:#d4d0c8"></div>
<div class="a" style="left:834px;top:0;width:1px;height:365px;background:#d4d0c8"></div>
<div class="a" style="left:889px;top:0;width:1px;height:365px;background:#d4d0c8"></div>
<div class="a" style="left:954px;top:0;width:1px;height:365px;background:#d4d0c8"></div>
<div class="a" style="left:1029px;top:0;width:1px;height:365px;background:#d4d0c8"></div>
<div class="a" style="left:1054px;top:0;width:1px;height:365px;background:#d4d0c8"></div>
<div class="a" style="left:1084px;top:0;width:1px;height:365px;background:#d4d0c8"></div>
<div class="t" style="left:1px;top:0px;line-height:14px;letter-spacing:-0.41px">DODGE G CARAVAN ...</div>
<div class="t" style="left:120px;width:21px;top:0px;line-height:14px;text-align:right">7</div>
<div class="t" style="left:146px;top:0px;line-height:14px;letter-spacing:-0.09px">Van(Mini) - Inclusive</div>
<div class="t" style="left:346px;top:0px;line-height:14px;letter-spacing:0">Flexible Car...</div>
<div class="t" style="left:421px;top:0px;line-height:14px;letter-spacing:0">Tue</div>
<div class="t" style="left:456px;top:0px;line-height:14px;letter-spacing:0">08/08/2017</div>
<div class="t" style="left:526px;top:0px;line-height:14px;letter-spacing:0">20:50</div>
<div class="t" style="left:566px;top:0px;line-height:14px;letter-spacing:0">Tue</div>
<div class="t" style="left:601px;top:0px;line-height:14px;letter-spacing:0">22/08/2017</div>
<div class="t" style="left:671px;top:0px;line-height:14px;letter-spacing:0">11:02</div>
<div class="t" style="left:710px;width:21px;top:0px;line-height:14px;text-align:right">14</div>
<div class="t" style="left:736px;top:0px;line-height:14px;letter-spacing:0">On Air...</div>
<div class="t" style="left:786px;top:0px;line-height:14px;letter-spacing:0">On Air...</div>
<div class="t" style="left:835px;width:51px;top:0px;line-height:14px;text-align:right">567.64</div>
<div class="t" style="left:890px;width:61px;top:0px;line-height:14px;text-align:right">567.64</div>
<div class="t" style="left:956px;top:0px;line-height:14px;letter-spacing:0">Alamo</div>
<div class="t" style="left:1031px;top:0px;line-height:14px;letter-spacing:0">yes</div>
<div class="t" style="left:1056px;top:0px;line-height:14px;letter-spacing:0">auto</div>
<div class="t" style="left:1px;top:15px;line-height:14px;letter-spacing:-0.41px">DODGE G CARAVAN ...</div>
<div class="t" style="left:120px;width:21px;top:15px;line-height:14px;text-align:right">7</div>
<div class="t" style="left:146px;top:15px;line-height:14px;letter-spacing:-0.09px">Van(Mini) - Inclusive</div>
<div class="t" style="left:346px;top:15px;line-height:14px;letter-spacing:0">Flexible Car...</div>
<div class="t" style="left:421px;top:15px;line-height:14px;letter-spacing:0">Tue</div>
<div class="t" style="left:456px;top:15px;line-height:14px;letter-spacing:0">08/08/2017</div>
<div class="t" style="left:526px;top:15px;line-height:14px;letter-spacing:0">20:50</div>
<div class="t" style="left:566px;top:15px;line-height:14px;letter-spacing:0">Tue</div>
<div class="t" style="left:601px;top:15px;line-height:14px;letter-spacing:0">22/08/2017</div>
<div class="t" style="left:671px;top:15px;line-height:14px;letter-spacing:0">11:02</div>
<div class="t" style="left:710px;width:21px;top:15px;line-height:14px;text-align:right">14</div>
<div class="t" style="left:736px;top:15px;line-height:14px;letter-spacing:0">On Air...</div>
<div class="t" style="left:786px;top:15px;line-height:14px;letter-spacing:0">On Air...</div>
<div class="t" style="left:835px;width:51px;top:15px;line-height:14px;text-align:right">591.47</div>
<div class="t" style="left:890px;width:61px;top:15px;line-height:14px;text-align:right">591.47</div>
<div class="t" style="left:956px;top:15px;line-height:14px;letter-spacing:0">National</div>
<div class="t" style="left:1031px;top:15px;line-height:14px;letter-spacing:0">yes</div>
<div class="t" style="left:1056px;top:15px;line-height:14px;letter-spacing:0">auto</div>
<div class="t" style="left:1px;top:30px;line-height:14px;letter-spacing:-0.41px">DODGE G CARAVAN ...</div>
<div class="t" style="left:120px;width:21px;top:30px;line-height:14px;text-align:right">7</div>
<div class="t" style="left:146px;top:30px;line-height:14px;letter-spacing:-0.11px">Van(Mini) - Inclusive - Plus Excess Ref...</div>
<div class="t" style="left:346px;top:30px;line-height:14px;letter-spacing:0">Flexible Car...</div>
<div class="t" style="left:421px;top:30px;line-height:14px;letter-spacing:0">Tue</div>
<div class="t" style="left:456px;top:30px;line-height:14px;letter-spacing:0">08/08/2017</div>
<div class="t" style="left:526px;top:30px;line-height:14px;letter-spacing:0">20:50</div>
<div class="t" style="left:566px;top:30px;line-height:14px;letter-spacing:0">Tue</div>
<div class="t" style="left:601px;top:30px;line-height:14px;letter-spacing:0">22/08/2017</div>
<div class="t" style="left:671px;top:30px;line-height:14px;letter-spacing:0">11:02</div>
<div class="t" style="left:710px;width:21px;top:30px;line-height:14px;text-align:right">14</div>
<div class="t" style="left:736px;top:30px;line-height:14px;letter-spacing:0">On Air...</div>
<div class="t" style="left:786px;top:30px;line-height:14px;letter-spacing:0">On Air...</div>
<div class="t" style="left:835px;width:51px;top:30px;line-height:14px;text-align:right">603.12</div>
<div class="t" style="left:890px;width:61px;top:30px;line-height:14px;text-align:right">603.12</div>
<div class="t" style="left:956px;top:30px;line-height:14px;letter-spacing:0">Alamo</div>
<div class="t" style="left:1031px;top:30px;line-height:14px;letter-spacing:0">yes</div>
<div class="t" style="left:1056px;top:30px;line-height:14px;letter-spacing:0">auto</div>
<div class="t" style="left:1px;top:45px;line-height:14px;letter-spacing:-0.41px">DODGE G CARAVAN ...</div>
<div class="t" style="left:120px;width:21px;top:45px;line-height:14px;text-align:right">7</div>
<div class="t" style="left:146px;top:45px;line-height:14px;letter-spacing:-0.23px">Van(Mini) - Gold</div>
<div class="t" style="left:346px;top:45px;line-height:14px;letter-spacing:0">Flexible Car...</div>
<div class="t" style="left:421px;top:45px;line-height:14px;letter-spacing:0">Tue</div>
<div class="t" style="left:456px;top:45px;line-height:14px;letter-spacing:0">08/08/2017</div>
<div class="t" style="left:526px;top:45px;line-height:14px;letter-spacing:0">20:50</div>
<div class="t" style="left:566px;top:45px;line-height:14px;letter-spacing:0">Tue</div>
<div class="t" style="left:601px;top:45px;line-height:14px;letter-spacing:0">22/08/2017</div>
<div class="t" style="left:671px;top:45px;line-height:14px;letter-spacing:0">11:02</div>
<div class="t" style="left:710px;width:21px;top:45px;line-height:14px;text-align:right">14</div>
<div class="t" style="left:736px;top:45px;line-height:14px;letter-spacing:0">On Air...</div>
<div class="t" style="left:786px;top:45px;line-height:14px;letter-spacing:0">On Air...</div>
<div class="t" style="left:835px;width:51px;top:45px;line-height:14px;text-align:right">623.39</div>
<div class="t" style="left:890px;width:61px;top:45px;line-height:14px;text-align:right">623.39</div>
<div class="t" style="left:956px;top:45px;line-height:14px;letter-spacing:0">Alamo</div>
<div class="t" style="left:1031px;top:45px;line-height:14px;letter-spacing:0">yes</div>
<div class="t" style="left:1056px;top:45px;line-height:14px;letter-spacing:0">auto</div>
<div class="t" style="left:1px;top:60px;line-height:14px;letter-spacing:-0.41px">DODGE G CARAVAN ...</div>
<div class="t" style="left:120px;width:21px;top:60px;line-height:14px;text-align:right">7</div>
<div class="t" style="left:146px;top:60px;line-height:14px;letter-spacing:-0.11px">Van(Mini) - Inclusive - Plus Excess Ref...</div>
<div class="t" style="left:346px;top:60px;line-height:14px;letter-spacing:0">Flexible Car...</div>
<div class="t" style="left:421px;top:60px;line-height:14px;letter-spacing:0">Tue</div>
<div class="t" style="left:456px;top:60px;line-height:14px;letter-spacing:0">08/08/2017</div>
<div class="t" style="left:526px;top:60px;line-height:14px;letter-spacing:0">20:50</div>
<div class="t" style="left:566px;top:60px;line-height:14px;letter-spacing:0">Tue</div>
<div class="t" style="left:601px;top:60px;line-height:14px;letter-spacing:0">22/08/2017</div>
<div class="t" style="left:671px;top:60px;line-height:14px;letter-spacing:0">11:02</div>
<div class="t" style="left:710px;width:21px;top:60px;line-height:14px;text-align:right">14</div>
<div class="t" style="left:736px;top:60px;line-height:14px;letter-spacing:0">On Air...</div>
<div class="t" style="left:786px;top:60px;line-height:14px;letter-spacing:0">On Air...</div>
<div class="t" style="left:835px;width:51px;top:60px;line-height:14px;text-align:right">626.95</div>
<div class="t" style="left:890px;width:61px;top:60px;line-height:14px;text-align:right">626.95</div>
<div class="t" style="left:956px;top:60px;line-height:14px;letter-spacing:0">National</div>
<div class="t" style="left:1031px;top:60px;line-height:14px;letter-spacing:0">yes</div>
<div class="t" style="left:1056px;top:60px;line-height:14px;letter-spacing:0">auto</div>
<div class="t" style="left:1px;top:75px;line-height:14px;letter-spacing:-0.41px">DODGE G CARAVAN ...</div>
<div class="t" style="left:120px;width:21px;top:75px;line-height:14px;text-align:right">7</div>
<div class="t" style="left:146px;top:75px;line-height:14px;letter-spacing:-0.23px">Van(Mini) - Gold</div>
<div class="t" style="left:346px;top:75px;line-height:14px;letter-spacing:0">Flexible Car...</div>
<div class="t" style="left:421px;top:75px;line-height:14px;letter-spacing:0">Tue</div>
<div class="t" style="left:456px;top:75px;line-height:14px;letter-spacing:0">08/08/2017</div>
<div class="t" style="left:526px;top:75px;line-height:14px;letter-spacing:0">20:50</div>
<div class="t" style="left:566px;top:75px;line-height:14px;letter-spacing:0">Tue</div>
<div class="t" style="left:601px;top:75px;line-height:14px;letter-spacing:0">22/08/2017</div>
<div class="t" style="left:671px;top:75px;line-height:14px;letter-spacing:0">11:02</div>
<div class="t" style="left:710px;width:21px;top:75px;line-height:14px;text-align:right">14</div>
<div class="t" style="left:736px;top:75px;line-height:14px;letter-spacing:0">On Air...</div>
<div class="t" style="left:786px;top:75px;line-height:14px;letter-spacing:0">On Air...</div>
<div class="t" style="left:835px;width:51px;top:75px;line-height:14px;text-align:right">652.86</div>
<div class="t" style="left:890px;width:61px;top:75px;line-height:14px;text-align:right">652.86</div>
<div class="t" style="left:956px;top:75px;line-height:14px;letter-spacing:0">National</div>
<div class="t" style="left:1031px;top:75px;line-height:14px;letter-spacing:0">yes</div>
<div class="t" style="left:1056px;top:75px;line-height:14px;letter-spacing:0">auto</div>
<div class="t" style="left:1px;top:90px;line-height:14px;letter-spacing:-0.41px">DODGE G CARAVAN ...</div>
<div class="t" style="left:120px;width:21px;top:90px;line-height:14px;text-align:right">7</div>
<div class="t" style="left:146px;top:90px;line-height:14px;letter-spacing:-0.24px">Van(Mini) - Gold - Plus Excess Refund</div>
<div class="t" style="left:346px;top:90px;line-height:14px;letter-spacing:0">Flexible Car...</div>
<div class="t" style="left:421px;top:90px;line-height:14px;letter-spacing:0">Tue</div>
<div class="t" style="left:456px;top:90px;line-height:14px;letter-spacing:0">08/08/2017</div>
<div class="t" style="left:526px;top:90px;line-height:14px;letter-spacing:0">20:50</div>
<div class="t" style="left:566px;top:90px;line-height:14px;letter-spacing:0">Tue</div>
<div class="t" style="left:601px;top:90px;line-height:14px;letter-spacing:0">22/08/2017</div>
<div class="t" style="left:671px;top:90px;line-height:14px;letter-spacing:0">11:02</div>
<div class="t" style="left:710px;width:21px;top:90px;line-height:14px;text-align:right">14</div>
<div class="t" style="left:736px;top:90px;line-height:14px;letter-spacing:0">On Air...</div>
<div class="t" style="left:786px;top:90px;line-height:14px;letter-spacing:0">On Air...</div>
<div class="t" style="left:835px;width:51px;top:90px;line-height:14px;text-align:right">658.86</div>
<div class="t" style="left:890px;width:61px;top:90px;line-height:14px;text-align:right">658.86</div>
<div class="t" style="left:956px;top:90px;line-height:14px;letter-spacing:0">Alamo</div>
<div class="t" style="left:1031px;top:90px;line-height:14px;letter-spacing:0">yes</div>
<div class="t" style="left:1056px;top:90px;line-height:14px;letter-spacing:0">auto</div>
<div class="t" style="left:1px;top:105px;line-height:14px;letter-spacing:-0.41px">DODGE G CARAVAN ...</div>
<div class="t" style="left:120px;width:21px;top:105px;line-height:14px;text-align:right">7</div>
<div class="t" style="left:146px;top:105px;line-height:14px;letter-spacing:-0.26px">Van(Mini) - Inclusive GPS</div>
<div class="t" style="left:346px;top:105px;line-height:14px;letter-spacing:0">Flexible Car...</div>
<div class="t" style="left:421px;top:105px;line-height:14px;letter-spacing:0">Tue</div>
<div class="t" style="left:456px;top:105px;line-height:14px;letter-spacing:0">08/08/2017</div>
<div class="t" style="left:526px;top:105px;line-height:14px;letter-spacing:0">20:50</div>
<div class="t" style="left:566px;top:105px;line-height:14px;letter-spacing:0">Tue</div>
<div class="t" style="left:601px;top:105px;line-height:14px;letter-spacing:0">22/08/2017</div>
<div class="t" style="left:671px;top:105px;line-height:14px;letter-spacing:0">11:02</div>
<div class="t" style="left:710px;width:21px;top:105px;line-height:14px;text-align:right">14</div>
<div class="t" style="left:736px;top:105px;line-height:14px;letter-spacing:0">On Air...</div>
<div class="t" style="left:786px;top:105px;line-height:14px;letter-spacing:0">On Air...</div>
<div class="t" style="left:835px;width:51px;top:105px;line-height:14px;text-align:right">662.95</div>
<div class="t" style="left:890px;width:61px;top:105px;line-height:14px;text-align:right">662.95</div>
<div class="t" style="left:956px;top:105px;line-height:14px;letter-spacing:0">Alamo</div>
<div class="t" style="left:1031px;top:105px;line-height:14px;letter-spacing:0">yes</div>
<div class="t" style="left:1056px;top:105px;line-height:14px;letter-spacing:0">auto</div>
<div class="t" style="left:1px;top:120px;line-height:14px;letter-spacing:-0.41px">DODGE G CARAVAN ...</div>
<div class="t" style="left:120px;width:21px;top:120px;line-height:14px;text-align:right">7</div>
<div class="t" style="left:146px;top:120px;line-height:14px;letter-spacing:-0.26px">Van(Mini) - Inclusive GPS</div>
<div class="t" style="left:346px;top:120px;line-height:14px;letter-spacing:0">Flexible Car...</div>
<div class="t" style="left:421px;top:120px;line-height:14px;letter-spacing:0">Tue</div>
<div class="t" style="left:456px;top:120px;line-height:14px;letter-spacing:0">08/08/2017</div>
<div class="t" style="left:526px;top:120px;line-height:14px;letter-spacing:0">20:50</div>
<div class="t" style="left:566px;top:120px;line-height:14px;letter-spacing:0">Tue</div>
<div class="t" style="left:601px;top:120px;line-height:14px;letter-spacing:0">22/08/2017</div>
<div class="t" style="left:671px;top:120px;line-height:14px;letter-spacing:0">11:02</div>
<div class="t" style="left:710px;width:21px;top:120px;line-height:14px;text-align:right">14</div>
<div class="t" style="left:736px;top:120px;line-height:14px;letter-spacing:0">On Air...</div>
<div class="t" style="left:786px;top:120px;line-height:14px;letter-spacing:0">On Air...</div>
<div class="t" style="left:835px;width:51px;top:120px;line-height:14px;text-align:right">681.68</div>
<div class="t" style="left:890px;width:61px;top:120px;line-height:14px;text-align:right">681.68</div>
<div class="t" style="left:956px;top:120px;line-height:14px;letter-spacing:0">National</div>
<div class="t" style="left:1031px;top:120px;line-height:14px;letter-spacing:0">yes</div>
<div class="t" style="left:1056px;top:120px;line-height:14px;letter-spacing:0">auto</div>
<div class="t" style="left:1px;top:135px;line-height:14px;letter-spacing:-0.41px">DODGE G CARAVAN ...</div>
<div class="t" style="left:120px;width:21px;top:135px;line-height:14px;text-align:right">7</div>
<div class="t" style="left:146px;top:135px;line-height:14px;letter-spacing:-0.24px">Van(Mini) - Gold - Plus Excess Refund</div>
<div class="t" style="left:346px;top:135px;line-height:14px;letter-spacing:0">Flexible Car...</div>
<div class="t" style="left:421px;top:135px;line-height:14px;letter-spacing:0">Tue</div>
<div class="t" style="left:456px;top:135px;line-height:14px;letter-spacing:0">08/08/2017</div>
<div class="t" style="left:526px;top:135px;line-height:14px;letter-spacing:0">20:50</div>
<div class="t" style="left:566px;top:135px;line-height:14px;letter-spacing:0">Tue</div>
<div class="t" style="left:601px;top:135px;line-height:14px;letter-spacing:0">22/08/2017</div>
<div class="t" style="left:671px;top:135px;line-height:14px;letter-spacing:0">11:02</div>
<div class="t" style="left:710px;width:21px;top:135px;line-height:14px;text-align:right">14</div>
<div class="t" style="left:736px;top:135px;line-height:14px;letter-spacing:0">On Air...</div>
<div class="t" style="left:786px;top:135px;line-height:14px;letter-spacing:0">On Air...</div>
<div class="t" style="left:835px;width:51px;top:135px;line-height:14px;text-align:right">688.34</div>
<div class="t" style="left:890px;width:61px;top:135px;line-height:14px;text-align:right">688.34</div>
<div class="t" style="left:956px;top:135px;line-height:14px;letter-spacing:0">National</div>
<div class="t" style="left:1031px;top:135px;line-height:14px;letter-spacing:0">yes</div>
<div class="t" style="left:1056px;top:135px;line-height:14px;letter-spacing:0">auto</div>
<div class="t" style="left:1px;top:150px;line-height:14px;letter-spacing:-0.36px">CHEVY TAHOE OR SI...</div>
<div class="t" style="left:120px;width:21px;top:150px;line-height:14px;text-align:right">7</div>
<div class="t" style="left:146px;top:150px;line-height:14px;letter-spacing:-0.28px">SUV(Full Size) - Inclusive</div>
<div class="t" style="left:346px;top:150px;line-height:14px;letter-spacing:0">Flexible Car...</div>
<div class="t" style="left:421px;top:150px;line-height:14px;letter-spacing:0">Tue</div>
<div class="t" style="left:456px;top:150px;line-height:14px;letter-spacing:0">08/08/2017</div>
<div class="t" style="left:526px;top:150px;line-height:14px;letter-spacing:0">20:50</div>
<div class="t" style="left:566px;top:150px;line-height:14px;letter-spacing:0">Tue</div>
<div class="t" style="left:601px;top:150px;line-height:14px;letter-spacing:0">22/08/2017</div>
<div class="t" style="left:671px;top:150px;line-height:14px;letter-spacing:0">11:02</div>
<div class="t" style="left:710px;width:21px;top:150px;line-height:14px;text-align:right">14</div>
<div class="t" style="left:736px;top:150px;line-height:14px;letter-spacing:0">On Air...</div>
<div class="t" style="left:786px;top:150px;line-height:14px;letter-spacing:0">On Air...</div>
<div class="t" style="left:835px;width:51px;top:150px;line-height:14px;text-align:right">691.71</div>
<div class="t" style="left:890px;width:61px;top:150px;line-height:14px;text-align:right">691.71</div>
<div class="t" style="left:956px;top:150px;line-height:14px;letter-spacing:0">Alamo</div>
<div class="t" style="left:1031px;top:150px;line-height:14px;letter-spacing:0">yes</div>
<div class="t" style="left:1056px;top:150px;line-height:14px;letter-spacing:0">auto</div>
<div class="t" style="left:1px;top:165px;line-height:14px;letter-spacing:-0.41px">DODGE G CARAVAN ...</div>
<div class="t" style="left:120px;width:21px;top:165px;line-height:14px;text-align:right">7</div>
<div class="t" style="left:146px;top:165px;line-height:14px;letter-spacing:-0.20px">Van(Mini) - Inclusive GPS - Plus Exces...</div>
<div class="t" style="left:346px;top:165px;line-height:14px;letter-spacing:0">Flexible Car...</div>
<div class="t" style="left:421px;top:165px;line-height:14px;letter-spacing:0">Tue</div>
<div class="t" style="left:456px;top:165px;line-height:14px;letter-spacing:0">08/08/2017</div>
<div class="t" style="left:526px;top:165px;line-height:14px;letter-spacing:0">20:50</div>
<div class="t" style="left:566px;top:165px;line-height:14px;letter-spacing:0">Tue</div>
<div class="t" style="left:601px;top:165px;line-height:14px;letter-spacing:0">22/08/2017</div>
<div class="t" style="left:671px;top:165px;line-height:14px;letter-spacing:0">11:02</div>
<div class="t" style="left:710px;width:21px;top:165px;line-height:14px;text-align:right">14</div>
<div class="t" style="left:736px;top:165px;line-height:14px;letter-spacing:0">On Air...</div>
<div class="t" style="left:786px;top:165px;line-height:14px;letter-spacing:0">On Air...</div>
<div class="t" style="left:835px;width:51px;top:165px;line-height:14px;text-align:right">698.42</div>
<div class="t" style="left:890px;width:61px;top:165px;line-height:14px;text-align:right">698.42</div>
<div class="t" style="left:956px;top:165px;line-height:14px;letter-spacing:0">Alamo</div>
<div class="t" style="left:1031px;top:165px;line-height:14px;letter-spacing:0">yes</div>
<div class="t" style="left:1056px;top:165px;line-height:14px;letter-spacing:0">auto</div>
<div class="t" style="left:1px;top:180px;line-height:14px;letter-spacing:-0.41px">DODGE G CARAVAN ...</div>
<div class="t" style="left:120px;width:21px;top:180px;line-height:14px;text-align:right">7</div>
<div class="t" style="left:146px;top:180px;line-height:14px;letter-spacing:-0.40px">Van(Mini) - Gold GPS</div>
<div class="t" style="left:346px;top:180px;line-height:14px;letter-spacing:0">Flexible Car...</div>
<div class="t" style="left:421px;top:180px;line-height:14px;letter-spacing:0">Tue</div>
<div class="t" style="left:456px;top:180px;line-height:14px;letter-spacing:0">08/08/2017</div>
<div class="t" style="left:526px;top:180px;line-height:14px;letter-spacing:0">20:50</div>
<div class="t" style="left:566px;top:180px;line-height:14px;letter-spacing:0">Tue</div>
<div class="t" style="left:601px;top:180px;line-height:14px;letter-spacing:0">22/08/2017</div>
<div class="t" style="left:671px;top:180px;line-height:14px;letter-spacing:0">11:02</div>
<div class="t" style="left:710px;width:21px;top:180px;line-height:14px;text-align:right">14</div>
<div class="t" style="left:736px;top:180px;line-height:14px;letter-spacing:0">On Air...</div>
<div class="t" style="left:786px;top:180px;line-height:14px;letter-spacing:0">On Air...</div>
<div class="t" style="left:835px;width:51px;top:180px;line-height:14px;text-align:right">715.08</div>
<div class="t" style="left:890px;width:61px;top:180px;line-height:14px;text-align:right">715.08</div>
<div class="t" style="left:956px;top:180px;line-height:14px;letter-spacing:0">Alamo</div>
<div class="t" style="left:1031px;top:180px;line-height:14px;letter-spacing:0">yes</div>
<div class="t" style="left:1056px;top:180px;line-height:14px;letter-spacing:0">auto</div>
<div class="t" style="left:1px;top:195px;line-height:14px;letter-spacing:-0.41px">DODGE G CARAVAN ...</div>
<div class="t" style="left:120px;width:21px;top:195px;line-height:14px;text-align:right">7</div>
<div class="t" style="left:146px;top:195px;line-height:14px;letter-spacing:-0.20px">Van(Mini) - Inclusive GPS - Plus Exces...</div>
<div class="t" style="left:346px;top:195px;line-height:14px;letter-spacing:0">Flexible Car...</div>
<div class="t" style="left:421px;top:195px;line-height:14px;letter-spacing:0">Tue</div>
<div class="t" style="left:456px;top:195px;line-height:14px;letter-spacing:0">08/08/2017</div>
<div class="t" style="left:526px;top:195px;line-height:14px;letter-spacing:0">20:50</div>
<div class="t" style="left:566px;top:195px;line-height:14px;letter-spacing:0">Tue</div>
<div class="t" style="left:601px;top:195px;line-height:14px;letter-spacing:0">22/08/2017</div>
<div class="t" style="left:671px;top:195px;line-height:14px;letter-spacing:0">11:02</div>
<div class="t" style="left:710px;width:21px;top:195px;line-height:14px;text-align:right">14</div>
<div class="t" style="left:736px;top:195px;line-height:14px;letter-spacing:0">On Air...</div>
<div class="t" style="left:786px;top:195px;line-height:14px;letter-spacing:0">On Air...</div>
<div class="t" style="left:835px;width:51px;top:195px;line-height:14px;text-align:right">717.15</div>
<div class="t" style="left:890px;width:61px;top:195px;line-height:14px;text-align:right">717.15</div>
<div class="t" style="left:956px;top:195px;line-height:14px;letter-spacing:0">National</div>
<div class="t" style="left:1031px;top:195px;line-height:14px;letter-spacing:0">yes</div>
<div class="t" style="left:1056px;top:195px;line-height:14px;letter-spacing:0">auto</div>
<div class="t" style="left:1px;top:210px;line-height:14px;letter-spacing:-0.36px">CHEVY TAHOE OR SI...</div>
<div class="t" style="left:120px;width:21px;top:210px;line-height:14px;text-align:right">7</div>
<div class="t" style="left:146px;top:210px;line-height:14px;letter-spacing:-0.23px">SUV(Full Size) - Inclusive - Plus Excess...</div>
<div class="t" style="left:346px;top:210px;line-height:14px;letter-spacing:0">Flexible Car...</div>
<div class="t" style="left:421px;top:210px;line-height:14px;letter-spacing:0">Tue</div>
<div class="t" style="left:456px;top:210px;line-height:14px;letter-spacing:0">08/08/2017</div>
<div class="t" style="left:526px;top:210px;line-height:14px;letter-spacing:0">20:50</div>
<div class="t" style="left:566px;top:210px;line-height:14px;letter-spacing:0">Tue</div>
<div class="t" style="left:601px;top:210px;line-height:14px;letter-spacing:0">22/08/2017</div>
<div class="t" style="left:671px;top:210px;line-height:14px;letter-spacing:0">11:02</div>
<div class="t" style="left:710px;width:21px;top:210px;line-height:14px;text-align:right">14</div>
<div class="t" style="left:736px;top:210px;line-height:14px;letter-spacing:0">On Air...</div>
<div class="t" style="left:786px;top:210px;line-height:14px;letter-spacing:0">On Air...</div>
<div class="t" style="left:835px;width:51px;top:210px;line-height:14px;text-align:right">727.19</div>
<div class="t" style="left:890px;width:61px;top:210px;line-height:14px;text-align:right">727.19</div>
<div class="t" style="left:956px;top:210px;line-height:14px;letter-spacing:0">Alamo</div>
<div class="t" style="left:1031px;top:210px;line-height:14px;letter-spacing:0">yes</div>
<div class="t" style="left:1056px;top:210px;line-height:14px;letter-spacing:0">auto</div>
<div class="t" style="left:1px;top:225px;line-height:14px;letter-spacing:-0.36px">CHEVY TAHOE OR SI...</div>
<div class="t" style="left:120px;width:21px;top:225px;line-height:14px;text-align:right">7</div>
<div class="t" style="left:146px;top:225px;line-height:14px;letter-spacing:-0.41px">SUV(Full Size) - Gold</div>
<div class="t" style="left:346px;top:225px;line-height:14px;letter-spacing:0">Flexible Car...</div>
<div class="t" style="left:421px;top:225px;line-height:14px;letter-spacing:0">Tue</div>
<div class="t" style="left:456px;top:225px;line-height:14px;letter-spacing:0">08/08/2017</div>
<div class="t" style="left:526px;top:225px;line-height:14px;letter-spacing:0">20:50</div>
<div class="t" style="left:566px;top:225px;line-height:14px;letter-spacing:0">Tue</div>
<div class="t" style="left:601px;top:225px;line-height:14px;letter-spacing:0">22/08/2017</div>
<div class="t" style="left:671px;top:225px;line-height:14px;letter-spacing:0">11:02</div>
<div class="t" style="left:710px;width:21px;top:225px;line-height:14px;text-align:right">14</div>
<div class="t" style="left:736px;top:225px;line-height:14px;letter-spacing:0">On Air...</div>
<div class="t" style="left:786px;top:225px;line-height:14px;letter-spacing:0">On Air...</div>
<div class="t" style="left:835px;width:51px;top:225px;line-height:14px;text-align:right">731.27</div>
<div class="t" style="left:890px;width:61px;top:225px;line-height:14px;text-align:right">731.27</div>
<div class="t" style="left:956px;top:225px;line-height:14px;letter-spacing:0">Alamo</div>
<div class="t" style="left:1031px;top:225px;line-height:14px;letter-spacing:0">yes</div>
<div class="t" style="left:1056px;top:225px;line-height:14px;letter-spacing:0">auto</div>
<div class="t" style="left:1px;top:240px;line-height:14px;letter-spacing:-0.41px">DODGE G CARAVAN ...</div>
<div class="t" style="left:120px;width:21px;top:240px;line-height:14px;text-align:right">7</div>
<div class="t" style="left:146px;top:240px;line-height:14px;letter-spacing:-0.40px">Van(Mini) - Gold GPS</div>
<div class="t" style="left:346px;top:240px;line-height:14px;letter-spacing:0">Flexible Car...</div>
<div class="t" style="left:421px;top:240px;line-height:14px;letter-spacing:0">Tue</div>
<div class="t" style="left:456px;top:240px;line-height:14px;letter-spacing:0">08/08/2017</div>
<div class="t" style="left:526px;top:240px;line-height:14px;letter-spacing:0">20:50</div>
<div class="t" style="left:566px;top:240px;line-height:14px;letter-spacing:0">Tue</div>
<div class="t" style="left:601px;top:240px;line-height:14px;letter-spacing:0">22/08/2017</div>
<div class="t" style="left:671px;top:240px;line-height:14px;letter-spacing:0">11:02</div>
<div class="t" style="left:710px;width:21px;top:240px;line-height:14px;text-align:right">14</div>
<div class="t" style="left:736px;top:240px;line-height:14px;letter-spacing:0">On Air...</div>
<div class="t" style="left:786px;top:240px;line-height:14px;letter-spacing:0">On Air...</div>
<div class="t" style="left:835px;width:51px;top:240px;line-height:14px;text-align:right">743.08</div>
<div class="t" style="left:890px;width:61px;top:240px;line-height:14px;text-align:right">743.08</div>
<div class="t" style="left:956px;top:240px;line-height:14px;letter-spacing:0">National</div>
<div class="t" style="left:1031px;top:240px;line-height:14px;letter-spacing:0">yes</div>
<div class="t" style="left:1056px;top:240px;line-height:14px;letter-spacing:0">auto</div>
<div class="t" style="left:1px;top:255px;line-height:14px;letter-spacing:-0.41px">DODGE G CARAVAN ...</div>
<div class="t" style="left:120px;width:21px;top:255px;line-height:14px;text-align:right">7</div>
<div class="t" style="left:146px;top:255px;line-height:14px;letter-spacing:-0.27px">Van(Mini) - Gold GPS - Plus Excess Ref...</div>
<div class="t" style="left:346px;top:255px;line-height:14px;letter-spacing:0">Flexible Car...</div>
<div class="t" style="left:421px;top:255px;line-height:14px;letter-spacing:0">Tue</div>
<div class="t" style="left:456px;top:255px;line-height:14px;letter-spacing:0">08/08/2017</div>
<div class="t" style="left:526px;top:255px;line-height:14px;letter-spacing:0">20:50</div>
<div class="t" style="left:566px;top:255px;line-height:14px;letter-spacing:0">Tue</div>
<div class="t" style="left:601px;top:255px;line-height:14px;letter-spacing:0">22/08/2017</div>
<div class="t" style="left:671px;top:255px;line-height:14px;letter-spacing:0">11:02</div>
<div class="t" style="left:710px;width:21px;top:255px;line-height:14px;text-align:right">14</div>
<div class="t" style="left:736px;top:255px;line-height:14px;letter-spacing:0">On Air...</div>
<div class="t" style="left:786px;top:255px;line-height:14px;letter-spacing:0">On Air...</div>
<div class="t" style="left:835px;width:51px;top:255px;line-height:14px;text-align:right">750.56</div>
<div class="t" style="left:890px;width:61px;top:255px;line-height:14px;text-align:right">750.56</div>
<div class="t" style="left:956px;top:255px;line-height:14px;letter-spacing:0">Alamo</div>
<div class="t" style="left:1031px;top:255px;line-height:14px;letter-spacing:0">yes</div>
<div class="t" style="left:1056px;top:255px;line-height:14px;letter-spacing:0">auto</div>
<div class="t" style="left:1px;top:270px;line-height:14px;letter-spacing:-0.36px">CHEVY TAHOE OR SI...</div>
<div class="t" style="left:120px;width:21px;top:270px;line-height:14px;text-align:right">7</div>
<div class="t" style="left:146px;top:270px;line-height:14px;letter-spacing:-0.25px">SUV(Full Size) - Gold - Plus Excess Ref...</div>
<div class="t" style="left:346px;top:270px;line-height:14px;letter-spacing:0">Flexible Car...</div>
<div class="t" style="left:421px;top:270px;line-height:14px;letter-spacing:0">Tue</div>
<div class="t" style="left:456px;top:270px;line-height:14px;letter-spacing:0">08/08/2017</div>
<div class="t" style="left:526px;top:270px;line-height:14px;letter-spacing:0">20:50</div>
<div class="t" style="left:566px;top:270px;line-height:14px;letter-spacing:0">Tue</div>
<div class="t" style="left:601px;top:270px;line-height:14px;letter-spacing:0">22/08/2017</div>
<div class="t" style="left:671px;top:270px;line-height:14px;letter-spacing:0">11:02</div>
<div class="t" style="left:710px;width:21px;top:270px;line-height:14px;text-align:right">14</div>
<div class="t" style="left:736px;top:270px;line-height:14px;letter-spacing:0">On Air...</div>
<div class="t" style="left:786px;top:270px;line-height:14px;letter-spacing:0">On Air...</div>
<div class="t" style="left:835px;width:51px;top:270px;line-height:14px;text-align:right">766.75</div>
<div class="t" style="left:890px;width:61px;top:270px;line-height:14px;text-align:right">766.75</div>
<div class="t" style="left:956px;top:270px;line-height:14px;letter-spacing:0">Alamo</div>
<div class="t" style="left:1031px;top:270px;line-height:14px;letter-spacing:0">yes</div>
<div class="t" style="left:1056px;top:270px;line-height:14px;letter-spacing:0">auto</div>
<div class="t" style="left:1px;top:285px;line-height:14px;letter-spacing:-0.41px">DODGE G CARAVAN ...</div>
<div class="t" style="left:120px;width:21px;top:285px;line-height:14px;text-align:right">7</div>
<div class="t" style="left:146px;top:285px;line-height:14px;letter-spacing:-0.27px">Van(Mini) - Gold GPS - Plus Excess Ref...</div>
<div class="t" style="left:346px;top:285px;line-height:14px;letter-spacing:0">Flexible Car...</div>
<div class="t" style="left:421px;top:285px;line-height:14px;letter-spacing:0">Tue</div>
<div class="t" style="left:456px;top:285px;line-height:14px;letter-spacing:0">08/08/2017</div>
<div class="t" style="left:526px;top:285px;line-height:14px;letter-spacing:0">20:50</div>
<div class="t" style="left:566px;top:285px;line-height:14px;letter-spacing:0">Tue</div>
<div class="t" style="left:601px;top:285px;line-height:14px;letter-spacing:0">22/08/2017</div>
<div class="t" style="left:671px;top:285px;line-height:14px;letter-spacing:0">11:02</div>
<div class="t" style="left:710px;width:21px;top:285px;line-height:14px;text-align:right">14</div>
<div class="t" style="left:736px;top:285px;line-height:14px;letter-spacing:0">On Air...</div>
<div class="t" style="left:786px;top:285px;line-height:14px;letter-spacing:0">On Air...</div>
<div class="t" style="left:835px;width:51px;top:285px;line-height:14px;text-align:right">778.55</div>
<div class="t" style="left:890px;width:61px;top:285px;line-height:14px;text-align:right">778.55</div>
<div class="t" style="left:956px;top:285px;line-height:14px;letter-spacing:0">National</div>
<div class="t" style="left:1031px;top:285px;line-height:14px;letter-spacing:0">yes</div>
<div class="t" style="left:1056px;top:285px;line-height:14px;letter-spacing:0">auto</div>
<div class="t" style="left:1px;top:300px;line-height:14px;letter-spacing:-0.36px">CHEVY TAHOE OR SI...</div>
<div class="t" style="left:120px;width:21px;top:300px;line-height:14px;text-align:right">7</div>
<div class="t" style="left:146px;top:300px;line-height:14px;letter-spacing:-0.40px">SUV(Full Size) - Inclusive GPS</div>
<div class="t" style="left:346px;top:300px;line-height:14px;letter-spacing:0">Flexible Car...</div>
<div class="t" style="left:421px;top:300px;line-height:14px;letter-spacing:0">Tue</div>
<div class="t" style="left:456px;top:300px;line-height:14px;letter-spacing:0">08/08/2017</div>
<div class="t" style="left:526px;top:300px;line-height:14px;letter-spacing:0">20:50</div>
<div class="t" style="left:566px;top:300px;line-height:14px;letter-spacing:0">Tue</div>
<div class="t" style="left:601px;top:300px;line-height:14px;letter-spacing:0">22/08/2017</div>
<div class="t" style="left:671px;top:300px;line-height:14px;letter-spacing:0">11:02</div>
<div class="t" style="left:710px;width:21px;top:300px;line-height:14px;text-align:right">14</div>
<div class="t" style="left:736px;top:300px;line-height:14px;letter-spacing:0">On Air...</div>
<div class="t" style="left:786px;top:300px;line-height:14px;letter-spacing:0">On Air...</div>
<div class="t" style="left:835px;width:51px;top:300px;line-height:14px;text-align:right">787.02</div>
<div class="t" style="left:890px;width:61px;top:300px;line-height:14px;text-align:right">787.02</div>
<div class="t" style="left:956px;top:300px;line-height:14px;letter-spacing:0">Alamo</div>
<div class="t" style="left:1031px;top:300px;line-height:14px;letter-spacing:0">yes</div>
<div class="t" style="left:1056px;top:300px;line-height:14px;letter-spacing:0">auto</div>
<div class="t" style="left:1px;top:315px;line-height:14px;letter-spacing:-0.41px">DODGE G CARAVAN ...</div>
<div class="t" style="left:120px;width:21px;top:315px;line-height:14px;text-align:right">7</div>
<div class="t" style="left:146px;top:315px;line-height:14px;letter-spacing:-0.07px">Van(Mini) - Young Driver Package (ag...</div>
<div class="t" style="left:346px;top:315px;line-height:14px;letter-spacing:0">Flexible Car...</div>
<div class="t" style="left:421px;top:315px;line-height:14px;letter-spacing:0">Tue</div>
<div class="t" style="left:456px;top:315px;line-height:14px;letter-spacing:0">08/08/2017</div>
<div class="t" style="left:526px;top:315px;line-height:14px;letter-spacing:0">20:50</div>
<div class="t" style="left:566px;top:315px;line-height:14px;letter-spacing:0">Tue</div>
<div class="t" style="left:601px;top:315px;line-height:14px;letter-spacing:0">22/08/2017</div>
<div class="t" style="left:671px;top:315px;line-height:14px;letter-spacing:0">11:02</div>
<div class="t" style="left:710px;width:21px;top:315px;line-height:14px;text-align:right">14</div>
<div class="t" style="left:736px;top:315px;line-height:14px;letter-spacing:0">On Air...</div>
<div class="t" style="left:786px;top:315px;line-height:14px;letter-spacing:0">On Air...</div>
<div class="t" style="left:835px;width:51px;top:315px;line-height:14px;text-align:right">803.20</div>
<div class="t" style="left:890px;width:61px;top:315px;line-height:14px;text-align:right">803.20</div>
<div class="t" style="left:956px;top:315px;line-height:14px;letter-spacing:0">Alamo</div>
<div class="t" style="left:1031px;top:315px;line-height:14px;letter-spacing:0">yes</div>
<div class="t" style="left:1056px;top:315px;line-height:14px;letter-spacing:0">auto</div>
<div class="t" style="left:1px;top:330px;line-height:14px;letter-spacing:-0.36px">CHEVY TAHOE OR SI...</div>
<div class="t" style="left:120px;width:21px;top:330px;line-height:14px;text-align:right">7</div>
<div class="t" style="left:146px;top:330px;line-height:14px;letter-spacing:-0.30px">SUV(Full Size) - Inclusive GPS - Plus E...</div>
<div class="t" style="left:346px;top:330px;line-height:14px;letter-spacing:0">Flexible Car...</div>
<div class="t" style="left:421px;top:330px;line-height:14px;letter-spacing:0">Tue</div>
<div class="t" style="left:456px;top:330px;line-height:14px;letter-spacing:0">08/08/2017</div>
<div class="t" style="left:526px;top:330px;line-height:14px;letter-spacing:0">20:50</div>
<div class="t" style="left:566px;top:330px;line-height:14px;letter-spacing:0">Tue</div>
<div class="t" style="left:601px;top:330px;line-height:14px;letter-spacing:0">22/08/2017</div>
<div class="t" style="left:671px;top:330px;line-height:14px;letter-spacing:0">11:02</div>
<div class="t" style="left:710px;width:21px;top:330px;line-height:14px;text-align:right">14</div>
<div class="t" style="left:736px;top:330px;line-height:14px;letter-spacing:0">On Air...</div>
<div class="t" style="left:786px;top:330px;line-height:14px;letter-spacing:0">On Air...</div>
<div class="t" style="left:835px;width:51px;top:330px;line-height:14px;text-align:right">822.49</div>
<div class="t" style="left:890px;width:61px;top:330px;line-height:14px;text-align:right">822.49</div>
<div class="t" style="left:956px;top:330px;line-height:14px;letter-spacing:0">Alamo</div>
<div class="t" style="left:1031px;top:330px;line-height:14px;letter-spacing:0">yes</div>
<div class="t" style="left:1056px;top:330px;line-height:14px;letter-spacing:0">auto</div>
<div class="t" style="left:1px;top:345px;line-height:14px;letter-spacing:-0.36px">CHEVY TAHOE OR SI...</div>
<div class="t" style="left:120px;width:21px;top:345px;line-height:14px;text-align:right">7</div>
<div class="t" style="left:146px;top:345px;line-height:14px;letter-spacing:-0.52px">SUV(Full Size) - Gold GPS</div>
<div class="t" style="left:346px;top:345px;line-height:14px;letter-spacing:0">Flexible Car...</div>
<div class="t" style="left:421px;top:345px;line-height:14px;letter-spacing:0">Tue</div>
<div class="t" style="left:456px;top:345px;line-height:14px;letter-spacing:0">08/08/2017</div>
<div class="t" style="left:526px;top:345px;line-height:14px;letter-spacing:0">20:50</div>
<div class="t" style="left:566px;top:345px;line-height:14px;letter-spacing:0">Tue</div>
<div class="t" style="left:601px;top:345px;line-height:14px;letter-spacing:0">22/08/2017</div>
<div class="t" style="left:671px;top:345px;line-height:14px;letter-spacing:0">11:02</div>
<div class="t" style="left:710px;width:21px;top:345px;line-height:14px;text-align:right">14</div>
<div class="t" style="left:736px;top:345px;line-height:14px;letter-spacing:0">On Air...</div>
<div class="t" style="left:786px;top:345px;line-height:14px;letter-spacing:0">On Air...</div>
<div class="t" style="left:835px;width:51px;top:345px;line-height:14px;text-align:right">822.98</div>
<div class="t" style="left:890px;width:61px;top:345px;line-height:14px;text-align:right">822.98</div>
<div class="t" style="left:956px;top:345px;line-height:14px;letter-spacing:0">Alamo</div>
<div class="t" style="left:1031px;top:345px;line-height:14px;letter-spacing:0">yes</div>
<div class="t" style="left:1056px;top:345px;line-height:14px;letter-spacing:0">auto</div>
<div class="t" style="left:1px;top:360px;line-height:14px;letter-spacing:-0.41px">DODGE G CARAVAN ...</div>
<div class="t" style="left:120px;width:21px;top:360px;line-height:14px;text-align:right">7</div>
<div class="t" style="left:146px;top:360px;line-height:14px;letter-spacing:0.00px">Van(Mini) - Young Driver Package (...</div>
<div class="t" style="left:346px;top:360px;line-height:14px;letter-spacing:0">Flexible Car...</div>
<div class="t" style="left:421px;top:360px;line-height:14px;letter-spacing:0">Tue</div>
<div class="t" style="left:456px;top:360px;line-height:14px;letter-spacing:0">08/08/2017</div>
<div class="t" style="left:526px;top:360px;line-height:14px;letter-spacing:0">20:50</div>
<div class="t" style="left:566px;top:360px;line-height:14px;letter-spacing:0">Tue</div>
<div class="t" style="left:601px;top:360px;line-height:14px;letter-spacing:0">22/08/2017</div>
<div class="t" style="left:671px;top:360px;line-height:14px;letter-spacing:0">11:02</div>
<div class="t" style="left:710px;width:21px;top:360px;line-height:14px;text-align:right">14</div>
<div class="t" style="left:736px;top:360px;line-height:14px;letter-spacing:0">On Air...</div>
<div class="t" style="left:786px;top:360px;line-height:14px;letter-spacing:0">On Air...</div>
<div class="t" style="left:835px;width:51px;top:360px;line-height:14px;text-align:right">861.91</div>
<div class="t" style="left:890px;width:61px;top:360px;line-height:14px;text-align:right">861.91</div>
<div class="t" style="left:956px;top:360px;line-height:14px;letter-spacing:0">National</div>
<div class="t" style="left:1031px;top:360px;line-height:14px;letter-spacing:0">yes</div>
<div class="t" style="left:1056px;top:360px;line-height:14px;letter-spacing:0">auto</div>
</div>
<div class="a" style="left:1573px;top:373px;width:11px;height:383px;background:repeating-conic-gradient(#d4d0c8 0 25%,#fff 0 50%) 0 0/2px 2px"></div>
<div class="a" style="left:1573px;top:373px;width:16px;height:15px;background:#d4d0c8;border-top:1px solid #d4d0c8;border-left:1px solid #d4d0c8;border-bottom:1px solid #404040;box-shadow:inset 1px 1px 0 #fff,inset 0 -1px 0 #808080"><svg style="left:3px;top:4px" width="7" height="4" viewBox="0 0 7 4"><path d="M0 4 L3.5 0 L7 4Z" fill="#000"/></svg></div>
<div class="a" style="left:1573px;top:388px;width:16px;height:180px;background:#d4d0c8;border-top:1px solid #d4d0c8;border-left:1px solid #d4d0c8;border-bottom:1px solid #404040;box-shadow:inset 1px 1px 0 #fff,inset 0 -1px 0 #808080"></div>
<div class="a" style="left:1573px;top:741px;width:16px;height:15px;background:#d4d0c8;border-top:1px solid #d4d0c8;border-left:1px solid #d4d0c8;border-bottom:1px solid #404040;box-shadow:inset 1px 1px 0 #fff,inset 0 -1px 0 #808080"><svg style="left:3px;top:4px" width="7" height="4" viewBox="0 0 7 4"><path d="M0 0 H7 L3.5 4Z" fill="#000"/></svg></div>
<div class="t" style="left:234px;top:782.5px;line-height:13px;">First portion: 10.8 sec, total search time: 15.3 sec</div>
<div class="a" style="left:1560px;top:778px;width:23px;height:22px;background:#d4d0c8;border-top:1px solid #fff;border-left:1px solid #fff;border-right:1px solid #404040;border-bottom:1px solid #404040;box-shadow:inset -1px -1px 0 #808080"><div class="t" style="left:8px;top:3px;line-height:15px;font-family:'Liberation Serif',serif;font-weight:bold;font-size:16px;color:#0a4aa8">i</div></div>
<div class="a" style="left:227px;top:805px;width:1357px;height:1px;background:#808080"></div>
<div class="a" style="left:227px;top:806px;width:1357px;height:17px;background:#d4d0c8"></div>
<div class="a" style="left:227px;top:806px;width:53px;height:17px;border-right:1px solid #808080"></div>
<div class="t" style="left:230px;top:807.5px;line-height:13px;color:#000;letter-spacing:-0.6px">Summary</div>
<div class="a" style="left:280px;top:806px;width:41px;height:17px;border-right:1px solid #808080"></div>
<div class="t" style="left:282px;top:807.5px;line-height:13px;color:#000;letter-spacing:-0.5px">Search</div>
<div class="a" style="left:321px;top:806px;width:83px;height:17px;background:#c4fcbc;border-right:1px solid #808080"></div>
<div class="t" style="left:323px;top:807.5px;line-height:13px;color:#000;letter-spacing:-0.48px">Acc 4A,1C MCO</div>
<div class="a" style="left:404px;top:805px;width:73px;height:17px;background:#0a880e;border-radius:2px 2px 3px 3px"></div>
<div class="t" style="left:408px;top:807.5px;line-height:13px;color:#fff;letter-spacing:-0.7px">Car MCO DAB</div>
<div class="a" style="left:477px;top:806px;width:97px;height:17px;border-right:1px solid #808080"></div>
<div class="t" style="left:481px;top:807.5px;line-height:13px;color:#000;letter-spacing:-0.38px">Financial Summary</div>
<div class="t" style="left:760px;top:831.5px;line-height:13px;">User: 415 - Hema Yoganathan</div>
<div class="t" style="left:916px;top:831.5px;line-height:13px;">Retailer: 'Ocean-Florida'</div>
<div class="t" style="left:1043px;top:831.5px;line-height:13px;">Client: none</div>
<div class="t" style="left:1540px;top:831.5px;line-height:13px;">21:19 GMT</div>
<div class="a" style="left:0px;top:857px;width:1584px;height:1px;background:#fff"></div>
<div class="a" style="left:2px;top:860px;width:52px;height:37px;background:#d4d0c8;border-top:1px solid #fff;border-left:1px solid #fff;border-right:1px solid #404040;border-bottom:1px solid #404040;box-shadow:inset -1px -1px 0 #808080"></div>
<svg style="left:4px;top:870px" width="16" height="17" viewBox="0 0 16 17"><path d="M1 3 Q4 1 7.5 3 L6.5 8 Q3 6 0 8Z" fill="#f05020"/><path d="M8.5 3 Q12 5 16 3 L15 8 Q11 10 7.5 8Z" fill="#40b030"/><path d="M0 9 Q3 7 6.5 9 L5.5 14 Q2 12 -1 14Z" fill="#2080e0"/><path d="M7.5 9 Q11 11 15 9 L14 14 Q10 16 6.5 14Z" fill="#f8c020"/></svg>
<div class="t" style="left:21px;top:872.5px;line-height:13px;font-weight:bold;font-size:12px;letter-spacing:0.3px">Start</div>
<div class="a" style="left:63px;top:860px;width:160px;height:37px;background:#fff;border-top:2px solid #484848;border-left:2px solid #484848;border-right:1px solid #fff;border-bottom:1px solid #fff"></div>
<svg style="left:69px;top:869px" width="30" height="21" viewBox="0 0 30 21"><defs><radialGradient id="tg" cx="0.35" cy="0.25" r="0.65"><stop offset="0" stop-color="#fff080"/><stop offset="0.4" stop-color="#f8c020"/><stop offset="1" stop-color="#c04808"/></radialGradient></defs><path d="M0 7 L3.5 1.5 L10 0 L27 4 L28.5 8 L16 20 L10 14.5 Z" fill="url(#tg)"/></svg>
<div class="t" style="left:102px;top:872.5px;line-height:13px;font-weight:bold;font-size:12px">Interactive - Ocea...</div>
<div class="a" style="left:1408px;top:860px;width:180px;height:38px;border-top:1px solid #808080;border-left:1px solid #808080;border-bottom:1px solid #fff"></div>
<svg style="left:1415px;top:871px" width="16" height="16" viewBox="0 0 16 16"><path d="M0 0 L8 0 L7 7 L0 8Z" fill="#f0a020"/><path d="M8 0 L16 1 L16 8 L7 7Z" fill="#2080d0"/><path d="M0 8 L7 7 L8 16 L0 16Z" fill="#40a040"/><path d="M7 7 L16 8 L16 16 L8 16Z" fill="#e03020"/></svg>
<svg style="left:1439px;top:873px" width="16" height="12" viewBox="0 0 16 12"><rect x="0.5" y="2.5" width="12" height="6" fill="#40c040" stroke="#206020"/><path d="M4 9 v2 M6 9 v2 M8 9 v2" stroke="#d0c000" stroke-width="1"/><path d="M13 1 H15.5 M13 1 V11" stroke="#000" stroke-width="1"/><rect x="10" y="4" width="2" height="2" fill="#000"/></svg>
<svg style="left:1463px;top:871px" width="16" height="17" viewBox="0 0 16 17"><rect x="4.5" y="3.5" width="11" height="10" fill="#c8c8c8" stroke="#808080"/><rect x="6" y="5" width="8" height="7" fill="#b0b0b0"/><path d="M2 1 v15 M0.5 1 v3 h3 v-3" stroke="#808080" fill="none"/><rect x="5" y="14" width="9" height="2" fill="#d0d0d0" stroke="#808080" stroke-width="0.5"/></svg>
<svg style="left:1487px;top:871px" width="16" height="16" viewBox="0 0 16 16"><path d="M0 5 H3 L7 1 V13 L3 9 H0Z" fill="#d0d0d0" stroke="#808080" stroke-width="0.7"/><circle cx="11" cy="11" r="4" fill="#e02020"/><path d="M9 9 L13 13 M13 9 L9 13" stroke="#fff" stroke-width="1.3"/></svg>
<div class="t" style="left:1505px;top:864.5px;width:80px;text-align:center;line-height:13px">21:19</div>
<div class="t" style="left:1505px;top:880.5px;width:80px;text-align:center;line-height:13px">31/01/2017</div>
<div class="a" style="left:1580px;top:874px;width:6px;height:12px;background:#2060c0"></div>
</div></body></html>
